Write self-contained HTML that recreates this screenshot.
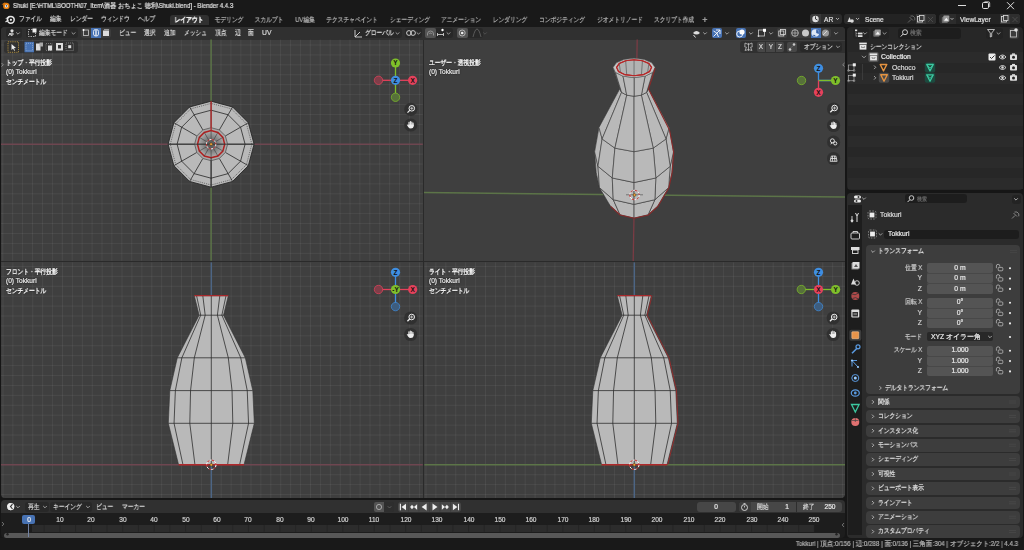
<!DOCTYPE html><html><head><meta charset="utf-8"><style>
html,body{margin:0;padding:0;width:1024px;height:550px;overflow:hidden;background:#161616}
body{position:relative;font-family:"Liberation Sans",sans-serif}
.t{position:absolute;white-space:nowrap;line-height:1.2;will-change:transform;-webkit-text-stroke:0.2px currentColor}
.b{position:absolute}
svg{position:absolute;overflow:hidden}
</style></head><body>
<div class="b" style="left:0.00px;top:0.00px;width:1024.00px;height:26.50px;background:#191919;"></div>
<svg style="left:0px;top:0px" width="14" height="12" viewBox="0 0 14 12"><g transform="translate(5.5,5.6)"><circle cx="0.8" cy="0.3" r="3.2" fill="#e87d0d"/><circle cx="0.9" cy="0.3" r="1.5" fill="#fff"/><circle cx="0.9" cy="0.3" r="0.8" fill="#265787"/><path d="M-4,-1 L0,-3.5 L-1.5,-1 Z" fill="#e87d0d"/></g></svg>
<div class="t" style="left:12.50px;top:1.92px;font-size:6.8px;color:#e2e2e2;transform:scaleX(0.89);transform-origin:left center;">Shuki [E:\HTML\BOOTH\07_Item\酒器 おちょこ 徳利\Shuki.blend] - Blender 4.4.3</div>
<div class="b" style="left:958.00px;top:5.20px;width:8.00px;height:0.90px;background:#dedede;"></div>
<svg style="left:976px;top:0px" width="20" height="12" viewBox="976 0 20 12"><rect x="982.5" y="2.5" width="6" height="6" rx="1.2" fill="none" stroke="#dedede" stroke-width="1"/><path d="M984.5,1.8 h4 a1.2,1.2 0 0 1 1.2,1.2 v4" fill="none" stroke="#dedede" stroke-width="0.8"/></svg>
<svg style="left:1000px;top:0px" width="24" height="12" viewBox="1000 0 24 12"><path d="M1007,2.2 L1014,9.2 M1014,2.2 L1007,9.2" stroke="#dedede" stroke-width="1"/></svg>
<svg style="left:0px;top:12px" width="20" height="14" viewBox="0 12 20 14"><g transform="translate(10,19.5)"><circle cx="0.8" cy="0.3" r="3.4" fill="none" stroke="#e6e6e6" stroke-width="1.5"/><circle cx="0.9" cy="0.3" r="1.1" fill="#e6e6e6"/><path d="M-4.8,-0.8 L-0.5,-3.9 L-1.6,-0.9 Z" fill="#e6e6e6"/><path d="M-4.5,2.5 L-1.5,0.5" stroke="#e6e6e6" stroke-width="1.2"/></g></svg>
<div class="t" style="left:19.00px;top:15.30px;font-size:7px;color:#d0d0d0;transform:scaleX(0.82);transform-origin:left center;">ファイル</div>
<div class="t" style="left:50.00px;top:15.30px;font-size:7px;color:#d0d0d0;transform:scaleX(0.82);transform-origin:left center;">編集</div>
<div class="t" style="left:70.00px;top:15.30px;font-size:7px;color:#d0d0d0;transform:scaleX(0.82);transform-origin:left center;">レンダー</div>
<div class="t" style="left:101.00px;top:15.30px;font-size:7px;color:#d0d0d0;transform:scaleX(0.82);transform-origin:left center;">ウィンドウ</div>
<div class="t" style="left:138.00px;top:15.30px;font-size:7px;color:#d0d0d0;transform:scaleX(0.82);transform-origin:left center;">ヘルプ</div>
<div class="b" style="left:169.80px;top:15.20px;width:39.00px;height:10.00px;background:#303030;border-radius:3px 3px 0 0"></div>
<div class="t" style="left:189.20px;top:16.20px;font-size:7px;color:#ececec;transform:translateX(-50%) scaleX(0.82);font-weight:bold;transform-origin:center center;">レイアウト</div>
<div class="t" style="left:229.00px;top:16.20px;font-size:7px;color:#b0b0b0;transform:translateX(-50%) scaleX(0.82);transform-origin:center center;">モデリング</div>
<div class="t" style="left:268.50px;top:16.20px;font-size:7px;color:#b0b0b0;transform:translateX(-50%) scaleX(0.82);transform-origin:center center;">スカルプト</div>
<div class="t" style="left:304.50px;top:16.20px;font-size:7px;color:#b0b0b0;transform:translateX(-50%) scaleX(0.82);transform-origin:center center;">UV編集</div>
<div class="t" style="left:351.50px;top:16.20px;font-size:7px;color:#b0b0b0;transform:translateX(-50%) scaleX(0.82);transform-origin:center center;">テクスチャペイント</div>
<div class="t" style="left:409.50px;top:16.20px;font-size:7px;color:#b0b0b0;transform:translateX(-50%) scaleX(0.82);transform-origin:center center;">シェーディング</div>
<div class="t" style="left:460.50px;top:16.20px;font-size:7px;color:#b0b0b0;transform:translateX(-50%) scaleX(0.82);transform-origin:center center;">アニメーション</div>
<div class="t" style="left:509.50px;top:16.20px;font-size:7px;color:#b0b0b0;transform:translateX(-50%) scaleX(0.82);transform-origin:center center;">レンダリング</div>
<div class="t" style="left:561.50px;top:16.20px;font-size:7px;color:#b0b0b0;transform:translateX(-50%) scaleX(0.82);transform-origin:center center;">コンポジティング</div>
<div class="t" style="left:619.50px;top:16.20px;font-size:7px;color:#b0b0b0;transform:translateX(-50%) scaleX(0.82);transform-origin:center center;">ジオメトリノード</div>
<div class="t" style="left:674.00px;top:16.20px;font-size:7px;color:#b0b0b0;transform:translateX(-50%) scaleX(0.82);transform-origin:center center;">スクリプト作成</div>
<div class="t" style="left:705.00px;top:14.80px;font-size:9px;color:#b8b8b8;transform:translateX(-50%) ;">+</div>
<div class="b" style="left:810.00px;top:14.00px;width:31.50px;height:10.00px;background:#2c2c2c;border-radius:3px"></div>
<div class="b" style="left:810.00px;top:14.00px;width:11.00px;height:10.00px;background:#3a3a3a;border-radius:3px 0 0 3px"></div>
<svg style="left:808px;top:12px" width="16" height="14" viewBox="808 12 16 14"><circle cx="815.5" cy="19" r="3.2" fill="#e0e0e0"/><path d="M815.5,19 L815.5,16.3 M815.5,19 L817.5,20" stroke="#2c2c2c" stroke-width="0.9"/></svg>
<div class="t" style="left:824.00px;top:15.74px;font-size:6.6px;color:#e0e0e0;">AR</div>
<svg style="left:832px;top:12px" width="10" height="14" viewBox="832 12 10 14"><path d="M836,18 l1.5,1.6 l1.5,-1.6" fill="none" stroke="#ccc" stroke-width="0.8"/></svg>
<div class="b" style="left:844.00px;top:14.00px;width:91.50px;height:10.00px;background:#232323;border-radius:3px"></div>
<div class="b" style="left:844.00px;top:14.00px;width:16.00px;height:10.00px;background:#2c2c2c;border-radius:3px 0 0 3px"></div>
<div class="b" style="left:915.50px;top:14.00px;width:20.00px;height:10.00px;background:#3a3a3a;border-radius:0 3px 3px 0"></div>
<div class="b" style="left:925.50px;top:14.00px;width:10.00px;height:10.00px;background:#2e2e2e;border-radius:0 3px 3px 0"></div>
<svg style="left:844px;top:12px" width="18" height="14" viewBox="844 12 18 14"><path d="M847.5,22 l2,-5 l2,5 z" fill="#ddd"/><circle cx="852" cy="21" r="1.8" fill="#ddd"/><path d="M856,18 l1.5,1.6 l1.5,-1.6" fill="none" stroke="#ccc" stroke-width="0.8"/></svg>
<div class="t" style="left:865.00px;top:15.74px;font-size:6.6px;color:#e0e0e0;">Scene</div>
<svg style="left:900px;top:12px" width="40" height="14" viewBox="900 12 40 14"><path d="M908,22.5 l3,-3 M909.5,17 l3.5,3.5 M910.5,16 l2.5,-0 l1.8,1.8 l0,2.5" stroke="#777" stroke-width="0.8" fill="none"/><rect x="917.5" y="16.5" width="5" height="5.5" fill="none" stroke="#ddd" stroke-width="0.8"/><rect x="919.5" y="15.5" width="4.5" height="5" fill="#3a3a3a" stroke="#ddd" stroke-width="0.8"/><path d="M928,17 l5,5 M933,17 l-5,5" stroke="#555" stroke-width="0.7"/></svg>
<div class="b" style="left:938.70px;top:14.00px;width:81.00px;height:10.00px;background:#232323;border-radius:3px"></div>
<div class="b" style="left:938.70px;top:14.00px;width:17.00px;height:10.00px;background:#2c2c2c;border-radius:3px 0 0 3px"></div>
<div class="b" style="left:1000.00px;top:14.00px;width:20.00px;height:10.00px;background:#3a3a3a;border-radius:0 3px 3px 0"></div>
<div class="b" style="left:1010.00px;top:14.00px;width:10.00px;height:10.00px;background:#2e2e2e;border-radius:0 3px 3px 0"></div>
<svg style="left:938px;top:12px" width="20" height="14" viewBox="938 12 20 14"><rect x="941.8" y="17" width="6" height="6" rx="0.8" fill="#6a6a6a"/><rect x="943.3" y="15.6" width="6" height="6.2" rx="0.8" fill="#9a9a9a"/><path d="M944.1,20.8 l2.2,-3 l2.2,3 z" fill="#f4f4f4"/><path d="M950.5,18 l1.5,1.6 l1.5,-1.6" fill="none" stroke="#ccc" stroke-width="0.8"/></svg>
<div class="t" style="left:959.50px;top:15.74px;font-size:6.6px;color:#e0e0e0;">ViewLayer</div>
<svg style="left:1000px;top:12px" width="24" height="14" viewBox="1000 12 24 14"><rect x="1001.5" y="16.5" width="5" height="5.5" fill="none" stroke="#ddd" stroke-width="0.8"/><rect x="1003.5" y="15.5" width="4.5" height="5" fill="#3a3a3a" stroke="#ddd" stroke-width="0.8"/><path d="M1012.5,17 l5,5 M1017.5,17 l-5,5" stroke="#555" stroke-width="0.7"/></svg>
<div class="b" style="left:1.00px;top:26.50px;width:844.00px;height:471.50px;background:#3f3f3f;border-radius:4px"></div>
<div class="b" style="left:1.00px;top:26.50px;width:844.00px;height:13.00px;background:#303030;border-radius:4px 4px 0 0"></div>
<div class="b" style="left:422.80px;top:39.50px;width:1.60px;height:458.50px;background:#2a2a2a;"></div>
<div class="b" style="left:1.00px;top:260.80px;width:844.00px;height:1.60px;background:#2a2a2a;"></div>
<svg style="left:1px;top:39px" width="422" height="222" viewBox="1 39 422 222"><g stroke="rgba(255,255,255,0.058)" stroke-width="1" fill="none"><path d="M2.78,39.5 V260.8"/><path d="M12.70,39.5 V260.8"/><path d="M22.62,39.5 V260.8"/><path d="M32.54,39.5 V260.8"/><path d="M42.46,39.5 V260.8"/><path d="M52.38,39.5 V260.8"/><path d="M62.30,39.5 V260.8"/><path d="M72.22,39.5 V260.8"/><path d="M82.14,39.5 V260.8"/><path d="M92.06,39.5 V260.8"/><path d="M101.98,39.5 V260.8"/><path d="M111.90,39.5 V260.8"/><path d="M121.82,39.5 V260.8"/><path d="M131.74,39.5 V260.8"/><path d="M141.66,39.5 V260.8"/><path d="M151.58,39.5 V260.8"/><path d="M161.50,39.5 V260.8"/><path d="M171.42,39.5 V260.8"/><path d="M181.34,39.5 V260.8"/><path d="M191.26,39.5 V260.8"/><path d="M201.18,39.5 V260.8"/><path d="M221.02,39.5 V260.8"/><path d="M230.94,39.5 V260.8"/><path d="M240.86,39.5 V260.8"/><path d="M250.78,39.5 V260.8"/><path d="M260.70,39.5 V260.8"/><path d="M270.62,39.5 V260.8"/><path d="M280.54,39.5 V260.8"/><path d="M290.46,39.5 V260.8"/><path d="M300.38,39.5 V260.8"/><path d="M310.30,39.5 V260.8"/><path d="M320.22,39.5 V260.8"/><path d="M330.14,39.5 V260.8"/><path d="M340.06,39.5 V260.8"/><path d="M349.98,39.5 V260.8"/><path d="M359.90,39.5 V260.8"/><path d="M369.82,39.5 V260.8"/><path d="M379.74,39.5 V260.8"/><path d="M389.66,39.5 V260.8"/><path d="M399.58,39.5 V260.8"/><path d="M409.50,39.5 V260.8"/><path d="M419.42,39.5 V260.8"/><path d="M1,45.00 H422.8"/><path d="M1,54.92 H422.8"/><path d="M1,64.84 H422.8"/><path d="M1,74.76 H422.8"/><path d="M1,84.68 H422.8"/><path d="M1,94.60 H422.8"/><path d="M1,104.52 H422.8"/><path d="M1,114.44 H422.8"/><path d="M1,124.36 H422.8"/><path d="M1,134.28 H422.8"/><path d="M1,154.12 H422.8"/><path d="M1,164.04 H422.8"/><path d="M1,173.96 H422.8"/><path d="M1,183.88 H422.8"/><path d="M1,193.80 H422.8"/><path d="M1,203.72 H422.8"/><path d="M1,213.64 H422.8"/><path d="M1,223.56 H422.8"/><path d="M1,233.48 H422.8"/><path d="M1,243.40 H422.8"/><path d="M1,253.32 H422.8"/></g></svg>
<svg style="left:1px;top:262px" width="422" height="236" viewBox="1 262 422 236"><g stroke="rgba(255,255,255,0.058)" stroke-width="1" fill="none"><path d="M2.98,262.40000000000003 V498"/><path d="M12.90,262.40000000000003 V498"/><path d="M22.82,262.40000000000003 V498"/><path d="M32.74,262.40000000000003 V498"/><path d="M42.66,262.40000000000003 V498"/><path d="M52.58,262.40000000000003 V498"/><path d="M62.50,262.40000000000003 V498"/><path d="M72.42,262.40000000000003 V498"/><path d="M82.34,262.40000000000003 V498"/><path d="M92.26,262.40000000000003 V498"/><path d="M102.18,262.40000000000003 V498"/><path d="M112.10,262.40000000000003 V498"/><path d="M122.02,262.40000000000003 V498"/><path d="M131.94,262.40000000000003 V498"/><path d="M141.86,262.40000000000003 V498"/><path d="M151.78,262.40000000000003 V498"/><path d="M161.70,262.40000000000003 V498"/><path d="M171.62,262.40000000000003 V498"/><path d="M181.54,262.40000000000003 V498"/><path d="M191.46,262.40000000000003 V498"/><path d="M201.38,262.40000000000003 V498"/><path d="M221.22,262.40000000000003 V498"/><path d="M231.14,262.40000000000003 V498"/><path d="M241.06,262.40000000000003 V498"/><path d="M250.98,262.40000000000003 V498"/><path d="M260.90,262.40000000000003 V498"/><path d="M270.82,262.40000000000003 V498"/><path d="M280.74,262.40000000000003 V498"/><path d="M290.66,262.40000000000003 V498"/><path d="M300.58,262.40000000000003 V498"/><path d="M310.50,262.40000000000003 V498"/><path d="M320.42,262.40000000000003 V498"/><path d="M330.34,262.40000000000003 V498"/><path d="M340.26,262.40000000000003 V498"/><path d="M350.18,262.40000000000003 V498"/><path d="M360.10,262.40000000000003 V498"/><path d="M370.02,262.40000000000003 V498"/><path d="M379.94,262.40000000000003 V498"/><path d="M389.86,262.40000000000003 V498"/><path d="M399.78,262.40000000000003 V498"/><path d="M409.70,262.40000000000003 V498"/><path d="M419.62,262.40000000000003 V498"/><path d="M1,266.40 H422.8"/><path d="M1,276.32 H422.8"/><path d="M1,286.24 H422.8"/><path d="M1,296.16 H422.8"/><path d="M1,306.08 H422.8"/><path d="M1,316.00 H422.8"/><path d="M1,325.92 H422.8"/><path d="M1,335.84 H422.8"/><path d="M1,345.76 H422.8"/><path d="M1,355.68 H422.8"/><path d="M1,365.60 H422.8"/><path d="M1,375.52 H422.8"/><path d="M1,385.44 H422.8"/><path d="M1,395.36 H422.8"/><path d="M1,405.28 H422.8"/><path d="M1,415.20 H422.8"/><path d="M1,425.12 H422.8"/><path d="M1,435.04 H422.8"/><path d="M1,444.96 H422.8"/><path d="M1,454.88 H422.8"/><path d="M1,474.72 H422.8"/><path d="M1,484.64 H422.8"/><path d="M1,494.56 H422.8"/></g></svg>
<svg style="left:424px;top:262px" width="421" height="236" viewBox="424 262 421 236"><g stroke="rgba(255,255,255,0.058)" stroke-width="1" fill="none"><path d="M425.98,262.40000000000003 V498"/><path d="M435.90,262.40000000000003 V498"/><path d="M445.82,262.40000000000003 V498"/><path d="M455.74,262.40000000000003 V498"/><path d="M465.66,262.40000000000003 V498"/><path d="M475.58,262.40000000000003 V498"/><path d="M485.50,262.40000000000003 V498"/><path d="M495.42,262.40000000000003 V498"/><path d="M505.34,262.40000000000003 V498"/><path d="M515.26,262.40000000000003 V498"/><path d="M525.18,262.40000000000003 V498"/><path d="M535.10,262.40000000000003 V498"/><path d="M545.02,262.40000000000003 V498"/><path d="M554.94,262.40000000000003 V498"/><path d="M564.86,262.40000000000003 V498"/><path d="M574.78,262.40000000000003 V498"/><path d="M584.70,262.40000000000003 V498"/><path d="M594.62,262.40000000000003 V498"/><path d="M604.54,262.40000000000003 V498"/><path d="M614.46,262.40000000000003 V498"/><path d="M624.38,262.40000000000003 V498"/><path d="M644.22,262.40000000000003 V498"/><path d="M654.14,262.40000000000003 V498"/><path d="M664.06,262.40000000000003 V498"/><path d="M673.98,262.40000000000003 V498"/><path d="M683.90,262.40000000000003 V498"/><path d="M693.82,262.40000000000003 V498"/><path d="M703.74,262.40000000000003 V498"/><path d="M713.66,262.40000000000003 V498"/><path d="M723.58,262.40000000000003 V498"/><path d="M733.50,262.40000000000003 V498"/><path d="M743.42,262.40000000000003 V498"/><path d="M753.34,262.40000000000003 V498"/><path d="M763.26,262.40000000000003 V498"/><path d="M773.18,262.40000000000003 V498"/><path d="M783.10,262.40000000000003 V498"/><path d="M793.02,262.40000000000003 V498"/><path d="M802.94,262.40000000000003 V498"/><path d="M812.86,262.40000000000003 V498"/><path d="M822.78,262.40000000000003 V498"/><path d="M832.70,262.40000000000003 V498"/><path d="M842.62,262.40000000000003 V498"/><path d="M424.40000000000003,266.40 H845"/><path d="M424.40000000000003,276.32 H845"/><path d="M424.40000000000003,286.24 H845"/><path d="M424.40000000000003,296.16 H845"/><path d="M424.40000000000003,306.08 H845"/><path d="M424.40000000000003,316.00 H845"/><path d="M424.40000000000003,325.92 H845"/><path d="M424.40000000000003,335.84 H845"/><path d="M424.40000000000003,345.76 H845"/><path d="M424.40000000000003,355.68 H845"/><path d="M424.40000000000003,365.60 H845"/><path d="M424.40000000000003,375.52 H845"/><path d="M424.40000000000003,385.44 H845"/><path d="M424.40000000000003,395.36 H845"/><path d="M424.40000000000003,405.28 H845"/><path d="M424.40000000000003,415.20 H845"/><path d="M424.40000000000003,425.12 H845"/><path d="M424.40000000000003,435.04 H845"/><path d="M424.40000000000003,444.96 H845"/><path d="M424.40000000000003,454.88 H845"/><path d="M424.40000000000003,474.72 H845"/><path d="M424.40000000000003,484.64 H845"/><path d="M424.40000000000003,494.56 H845"/></g></svg>
<svg style="left:1px;top:141px" width="422" height="6" viewBox="1 141 422 6"><path d="M1,144.2 H422.8" stroke="#6e4650" stroke-width="1.5"/></svg>
<svg style="left:208px;top:39px" width="6" height="222" viewBox="208 39 6 222"><path d="M211.1,39.5 V260.8" stroke="#5c7448" stroke-width="1.5"/></svg>
<svg style="left:1px;top:461px" width="422" height="6" viewBox="1 461 422 6"><path d="M1,464.8 H422.8" stroke="#6e4650" stroke-width="1.5"/></svg>
<svg style="left:208px;top:262px" width="6" height="236" viewBox="208 262 6 236"><path d="M211.3,262.40000000000003 V498" stroke="#4d6584" stroke-width="1.5"/></svg>
<svg style="left:424px;top:461px" width="421" height="6" viewBox="424 461 421 6"><path d="M424.40000000000003,464.8 H845" stroke="#5c7448" stroke-width="1.5"/></svg>
<svg style="left:631px;top:262px" width="6" height="236" viewBox="631 262 6 236"><path d="M634.3,262.40000000000003 V498" stroke="#4d6584" stroke-width="1.5"/></svg>
<svg style="left:424px;top:185px" width="421" height="20" viewBox="424 185 421 20"><path d="M424,192.6 L845,197" stroke="#5c7448" stroke-width="1.5"/></svg>
<svg style="left:625px;top:39px" width="20" height="223" viewBox="625 39 20 223"><path d="M637.2,39.5 L633.2,261" stroke="#7a3c44" stroke-width="1.3"/></svg>
<svg style="left:1px;top:262px" width="421" height="235" viewBox="1 262 421 235"><path d="M228.30,295.70 L223.50,315.20 L245.30,357.80 L252.80,390.60 L254.30,423.30 L244.00,464.80 L178.60,464.80 L168.30,423.30 L169.80,390.60 L177.30,357.80 L199.10,315.20 L194.30,295.70Z" fill="#b9b9b9" stroke="#303030" stroke-width="0.6"/><path d="M199.10,315.20 H223.50 M177.30,357.80 H245.30 M169.80,390.60 H252.80 M168.30,423.30 H254.30 M226.02,295.70 L221.87,315.20 L240.74,357.80 L247.24,390.60 L248.54,423.30 L239.62,464.80 M219.80,295.70 L217.40,315.20 L228.30,357.80 L232.05,390.60 L232.80,423.30 L227.65,464.80 M211.30,295.70 L211.30,315.20 L211.30,357.80 L211.30,390.60 L211.30,423.30 L211.30,464.80 M202.80,295.70 L205.20,315.20 L194.30,357.80 L190.55,390.60 L189.80,423.30 L194.95,464.80 M196.58,295.70 L200.73,315.20 L181.86,357.80 L175.36,390.60 L174.06,423.30 L182.98,464.80" fill="none" stroke="#262626" stroke-width="0.75"/><path d="M194.30,295.70 H228.30" stroke="#a8282b" stroke-width="1.2"/><path d="M178.60,464.80 H244.00" stroke="#b0282b" stroke-width="1.6"/><circle cx="211.3" cy="464.8" r="4.7" fill="none" stroke="#fff" stroke-width="1" stroke-dasharray="2.46 2.46"/><circle cx="211.3" cy="464.8" r="4.7" fill="none" stroke="#d03030" stroke-width="1" stroke-dasharray="2.46 2.46" stroke-dashoffset="2.46"/><circle cx="211.3" cy="464.8" r="1.4" fill="#f0a030" stroke="#222" stroke-width="0.4"/></svg>
<svg style="left:424px;top:262px" width="420" height="235" viewBox="424 262 420 235"><path d="M651.30,295.70 L646.50,315.20 L668.30,357.80 L675.80,390.60 L677.30,423.30 L667.00,464.80 L601.60,464.80 L591.30,423.30 L592.80,390.60 L600.30,357.80 L622.10,315.20 L617.30,295.70Z" fill="#b9b9b9" stroke="#303030" stroke-width="0.6"/><path d="M622.10,315.20 H646.50 M600.30,357.80 H668.30 M592.80,390.60 H675.80 M591.30,423.30 H677.30 M649.02,295.70 L644.87,315.20 L663.74,357.80 L670.24,390.60 L671.54,423.30 L662.62,464.80 M642.80,295.70 L640.40,315.20 L651.30,357.80 L655.05,390.60 L655.80,423.30 L650.65,464.80 M634.30,295.70 L634.30,315.20 L634.30,357.80 L634.30,390.60 L634.30,423.30 L634.30,464.80 M625.80,295.70 L628.20,315.20 L617.30,357.80 L613.55,390.60 L612.80,423.30 L617.95,464.80 M619.58,295.70 L623.73,315.20 L604.86,357.80 L598.36,390.60 L597.06,423.30 L605.98,464.80" fill="none" stroke="#262626" stroke-width="0.75"/><path d="M617.30,295.70 H651.30" stroke="#a8282b" stroke-width="1.2"/><path d="M601.60,464.80 H667.00" stroke="#b0282b" stroke-width="1.6"/><path d="M652.00,295.70 L647.20,315.20 L669.00,357.80 L676.50,390.60 L678.00,423.30 L667.70,464.80" fill="none" stroke="#9a2a2a" stroke-width="0.9"/><circle cx="634.3" cy="464.8" r="4.7" fill="none" stroke="#fff" stroke-width="1" stroke-dasharray="2.46 2.46"/><circle cx="634.3" cy="464.8" r="4.7" fill="none" stroke="#d03030" stroke-width="1" stroke-dasharray="2.46 2.46" stroke-dashoffset="2.46"/><circle cx="634.3" cy="464.8" r="1.4" fill="#f0a030" stroke="#222" stroke-width="0.4"/></svg>
<svg style="left:1px;top:39px" width="421" height="221" viewBox="1 39 421 221"><path d="M254.10,144.20 L248.34,122.70 L232.60,106.96 L211.10,101.20 L189.60,106.96 L173.86,122.70 L168.10,144.20 L173.86,165.70 L189.60,181.44 L211.10,187.20 L232.60,181.44 L248.34,165.70Z" fill="#b9b9b9" stroke="#262626" stroke-width="0.9"/><path d="M251.90,144.20 L246.43,123.80 L231.50,108.87 L211.10,103.40 L190.70,108.87 L175.77,123.80 L170.30,144.20 L175.77,164.60 L190.70,179.53 L211.10,185.00 L231.50,179.53 L246.43,164.60Z" fill="none" stroke="#3a3a3a" stroke-width="0.6" stroke-dasharray="1.2 1"/><path d="M245.10,144.20 L240.54,127.20 L228.10,114.76 L211.10,110.20 L194.10,114.76 L181.66,127.20 L177.10,144.20 L181.66,161.20 L194.10,173.64 L211.10,178.20 L228.10,173.64 L240.54,161.20Z" fill="none" stroke="#262626" stroke-width="0.8"/><path d="M227.60,144.20 L254.10,144.20 M225.39,135.95 L248.34,122.70 M219.35,129.91 L232.60,106.96 M211.10,127.70 L211.10,101.20 M202.85,129.91 L189.60,106.96 M196.81,135.95 L173.86,122.70 M194.60,144.20 L168.10,144.20 M196.81,152.45 L173.86,165.70 M202.85,158.49 L189.60,181.44 M211.10,160.70 L211.10,187.20 M219.35,158.49 L232.60,181.44 M225.39,152.45 L248.34,165.70" stroke="#262626" stroke-width="0.8"/><defs><radialGradient id="inn"><stop offset="0" stop-color="#505050"/><stop offset="0.6" stop-color="#8a8a8a"/><stop offset="1" stop-color="#b0b0b0"/></radialGradient></defs><path d="M227.60,144.20 L225.39,135.95 L219.35,129.91 L211.10,127.70 L202.85,129.91 L196.81,135.95 L194.60,144.20 L196.81,152.45 L202.85,158.49 L211.10,160.70 L219.35,158.49 L225.39,152.45Z" fill="#a8a8a8" stroke="#555" stroke-width="0.8"/><path d="M224.70,144.20 L222.88,137.40 L217.90,132.42 L211.10,130.60 L204.30,132.42 L199.32,137.40 L197.50,144.20 L199.32,151.00 L204.30,155.98 L211.10,157.80 L217.90,155.98 L222.88,151.00Z" fill="url(#inn)" stroke="#b02020" stroke-width="1.5"/><path d="M214.10,144.20 L224.70,144.20 M213.70,142.70 L222.88,137.40 M212.60,141.60 L217.90,132.42 M211.10,141.20 L211.10,130.60 M209.60,141.60 L204.30,132.42 M208.50,142.70 L199.32,137.40 M208.10,144.20 L197.50,144.20 M208.50,145.70 L199.32,151.00 M209.60,146.80 L204.30,155.98 M211.10,147.20 L211.10,157.80 M212.60,146.80 L217.90,155.98 M213.70,145.70 L222.88,151.00" stroke="#3a3a3a" stroke-width="0.6"/><path d="M168.1,144.2 H254.1" stroke="#333" stroke-width="0.9"/><path d="M211.1,101.19999999999999 V130.6" stroke="#b52828" stroke-width="1.3"/><path d="M211.1,157.79999999999998 V187.2" stroke="#262626" stroke-width="0.8"/><circle cx="211.1" cy="144.2" r="4.7" fill="none" stroke="#fff" stroke-width="1" stroke-dasharray="2.46 2.46"/><circle cx="211.1" cy="144.2" r="4.7" fill="none" stroke="#d03030" stroke-width="1" stroke-dasharray="2.46 2.46" stroke-dashoffset="2.46"/><circle cx="211.1" cy="144.2" r="1.4" fill="#f0a030" stroke="#222" stroke-width="0.4"/></svg>
<svg style="left:424px;top:39px" width="420" height="221" viewBox="424 39 420 221"><path d="M651.41,150.09 L634.06,146.94 L634.06,175.06 L646.45,177.57Z" fill="#b9b9b9" stroke="#383838" stroke-width="0.62" stroke-linejoin="round"/><path d="M634.06,146.94 L616.72,150.09 L621.68,177.57 L634.06,175.06Z" fill="#b9b9b9" stroke="#383838" stroke-width="0.62" stroke-linejoin="round"/><path d="M665.21,159.14 L651.41,150.09 L646.45,177.57 L656.07,184.67Z" fill="#b9b9b9" stroke="#383838" stroke-width="0.62" stroke-linejoin="round"/><path d="M616.72,150.09 L602.92,159.14 L612.06,184.67 L621.68,177.57Z" fill="#b9b9b9" stroke="#383838" stroke-width="0.62" stroke-linejoin="round"/><path d="M671.92,172.63 L665.21,159.14 L656.07,184.67 L660.40,194.99Z" fill="#b9b9b9" stroke="#383838" stroke-width="0.62" stroke-linejoin="round"/><path d="M602.92,159.14 L596.21,172.63 L607.72,194.99 L612.06,184.67Z" fill="#b9b9b9" stroke="#383838" stroke-width="0.62" stroke-linejoin="round"/><path d="M652.07,130.26 L634.06,127.25 L634.06,146.94 L651.41,150.09Z" fill="#b9b9b9" stroke="#383838" stroke-width="0.62" stroke-linejoin="round"/><path d="M634.06,127.25 L616.06,130.26 L616.72,150.09 L634.06,146.94Z" fill="#b9b9b9" stroke="#383838" stroke-width="0.62" stroke-linejoin="round"/><path d="M666.43,138.91 L652.07,130.26 L651.41,150.09 L665.21,159.14Z" fill="#b9b9b9" stroke="#383838" stroke-width="0.62" stroke-linejoin="round"/><path d="M616.06,130.26 L601.69,138.91 L602.92,159.14 L616.72,150.09Z" fill="#b9b9b9" stroke="#383838" stroke-width="0.62" stroke-linejoin="round"/><path d="M596.21,172.63 L599.46,187.62 L610.39,206.10 L607.72,194.99Z" fill="#b9b9b9" stroke="#383838" stroke-width="0.62" stroke-linejoin="round"/><path d="M668.67,187.62 L671.92,172.63 L660.40,194.99 L657.74,206.10Z" fill="#b9b9b9" stroke="#383838" stroke-width="0.62" stroke-linejoin="round"/><path d="M673.49,151.85 L666.43,138.91 L665.21,159.14 L671.92,172.63Z" fill="#b9b9b9" stroke="#383838" stroke-width="0.62" stroke-linejoin="round"/><path d="M601.69,138.91 L594.64,151.85 L596.21,172.63 L602.92,159.14Z" fill="#b9b9b9" stroke="#383838" stroke-width="0.62" stroke-linejoin="round"/><path d="M599.46,187.62 L613.24,199.70 L620.00,214.78 L610.39,206.10Z" fill="#b9b9b9" stroke="#383838" stroke-width="0.62" stroke-linejoin="round"/><path d="M654.89,199.70 L668.67,187.62 L657.74,206.10 L648.12,214.78Z" fill="#b9b9b9" stroke="#383838" stroke-width="0.62" stroke-linejoin="round"/><path d="M650.24,109.93 L634.06,107.46 L634.06,127.25 L652.07,130.26Z" fill="#b9b9b9" stroke="#383838" stroke-width="0.62" stroke-linejoin="round"/><path d="M634.06,107.46 L617.89,109.93 L616.06,130.26 L634.06,127.25Z" fill="#b9b9b9" stroke="#383838" stroke-width="0.62" stroke-linejoin="round"/><path d="M613.24,199.70 L634.06,204.38 L634.06,218.08 L620.00,214.78Z" fill="#b9b9b9" stroke="#383838" stroke-width="0.62" stroke-linejoin="round"/><path d="M634.06,204.38 L654.89,199.70 L648.12,214.78 L634.06,218.08Z" fill="#b9b9b9" stroke="#383838" stroke-width="0.62" stroke-linejoin="round"/><path d="M663.03,116.98 L650.24,109.93 L652.07,130.26 L666.43,138.91Z" fill="#b9b9b9" stroke="#383838" stroke-width="0.62" stroke-linejoin="round"/><path d="M617.89,109.93 L605.09,116.98 L601.69,138.91 L616.06,130.26Z" fill="#b9b9b9" stroke="#383838" stroke-width="0.62" stroke-linejoin="round"/><path d="M594.64,151.85 L597.94,166.29 L599.46,187.62 L596.21,172.63Z" fill="#b9b9b9" stroke="#383838" stroke-width="0.62" stroke-linejoin="round"/><path d="M670.19,166.29 L673.49,151.85 L671.92,172.63 L668.67,187.62Z" fill="#b9b9b9" stroke="#383838" stroke-width="0.62" stroke-linejoin="round"/><path d="M605.09,116.98 L598.98,127.42 L594.64,151.85 L601.69,138.91Z" fill="#b9b9b9" stroke="#383838" stroke-width="0.62" stroke-linejoin="round"/><path d="M669.15,127.42 L663.03,116.98 L666.43,138.91 L673.49,151.85Z" fill="#b9b9b9" stroke="#383838" stroke-width="0.62" stroke-linejoin="round"/><path d="M597.94,166.29 L612.28,177.98 L613.24,199.70 L599.46,187.62Z" fill="#b9b9b9" stroke="#383838" stroke-width="0.62" stroke-linejoin="round"/><path d="M655.84,177.98 L670.19,166.29 L668.67,187.62 L654.89,199.70Z" fill="#b9b9b9" stroke="#383838" stroke-width="0.62" stroke-linejoin="round"/><path d="M612.28,177.98 L634.06,182.51 L634.06,204.38 L613.24,199.70Z" fill="#b9b9b9" stroke="#383838" stroke-width="0.62" stroke-linejoin="round"/><path d="M634.06,182.51 L655.84,177.98 L654.89,199.70 L634.06,204.38Z" fill="#b9b9b9" stroke="#383838" stroke-width="0.62" stroke-linejoin="round"/><path d="M598.98,127.42 L602.12,138.94 L597.94,166.29 L594.64,151.85Z" fill="#b9b9b9" stroke="#383838" stroke-width="0.62" stroke-linejoin="round"/><path d="M666.00,138.94 L669.15,127.42 L673.49,151.85 L670.19,166.29Z" fill="#b9b9b9" stroke="#383838" stroke-width="0.62" stroke-linejoin="round"/><path d="M640.92,82.49 L634.06,81.57 L634.06,107.46 L650.24,109.93Z" fill="#b9b9b9" stroke="#383838" stroke-width="0.62" stroke-linejoin="round"/><path d="M634.06,81.57 L627.21,82.49 L617.89,109.93 L634.06,107.46Z" fill="#b9b9b9" stroke="#383838" stroke-width="0.62" stroke-linejoin="round"/><path d="M646.10,85.03 L640.92,82.49 L650.24,109.93 L663.03,116.98Z" fill="#b9b9b9" stroke="#383838" stroke-width="0.62" stroke-linejoin="round"/><path d="M627.21,82.49 L622.03,85.03 L605.09,116.98 L617.89,109.93Z" fill="#b9b9b9" stroke="#383838" stroke-width="0.62" stroke-linejoin="round"/><path d="M602.12,138.94 L614.90,148.15 L612.28,177.98 L597.94,166.29Z" fill="#b9b9b9" stroke="#383838" stroke-width="0.62" stroke-linejoin="round"/><path d="M653.22,148.15 L666.00,138.94 L670.19,166.29 L655.84,177.98Z" fill="#b9b9b9" stroke="#383838" stroke-width="0.62" stroke-linejoin="round"/><path d="M648.24,88.62 L646.10,85.03 L663.03,116.98 L669.15,127.42Z" fill="#b9b9b9" stroke="#383838" stroke-width="0.62" stroke-linejoin="round"/><path d="M622.03,85.03 L619.89,88.62 L598.98,127.42 L605.09,116.98Z" fill="#b9b9b9" stroke="#383838" stroke-width="0.62" stroke-linejoin="round"/><path d="M614.90,148.15 L634.06,151.70 L634.06,182.51 L612.28,177.98Z" fill="#b9b9b9" stroke="#383838" stroke-width="0.62" stroke-linejoin="round"/><path d="M634.06,151.70 L653.22,148.15 L655.84,177.98 L634.06,182.51Z" fill="#b9b9b9" stroke="#383838" stroke-width="0.62" stroke-linejoin="round"/><path d="M619.89,88.62 L621.54,92.35 L602.12,138.94 L598.98,127.42Z" fill="#b9b9b9" stroke="#383838" stroke-width="0.62" stroke-linejoin="round"/><path d="M646.59,92.35 L648.24,88.62 L669.15,127.42 L666.00,138.94Z" fill="#b9b9b9" stroke="#383838" stroke-width="0.62" stroke-linejoin="round"/><path d="M644.04,59.49 L634.06,58.33 L634.06,81.57 L640.92,82.49Z" fill="#b9b9b9" stroke="#383838" stroke-width="0.62" stroke-linejoin="round"/><path d="M634.06,58.33 L624.09,59.49 L627.21,82.49 L634.06,81.57Z" fill="#b9b9b9" stroke="#383838" stroke-width="0.62" stroke-linejoin="round"/><path d="M621.54,92.35 L626.73,95.19 L614.90,148.15 L602.12,138.94Z" fill="#b9b9b9" stroke="#383838" stroke-width="0.62" stroke-linejoin="round"/><path d="M641.40,95.19 L646.59,92.35 L666.00,138.94 L653.22,148.15Z" fill="#b9b9b9" stroke="#383838" stroke-width="0.62" stroke-linejoin="round"/><path d="M651.70,62.73 L644.04,59.49 L640.92,82.49 L646.10,85.03Z" fill="#b9b9b9" stroke="#383838" stroke-width="0.62" stroke-linejoin="round"/><path d="M624.09,59.49 L616.43,62.73 L622.03,85.03 L627.21,82.49Z" fill="#b9b9b9" stroke="#383838" stroke-width="0.62" stroke-linejoin="round"/><path d="M626.73,95.19 L634.06,96.24 L634.06,151.70 L614.90,148.15Z" fill="#b9b9b9" stroke="#383838" stroke-width="0.62" stroke-linejoin="round"/><path d="M634.06,96.24 L641.40,95.19 L653.22,148.15 L634.06,151.70Z" fill="#b9b9b9" stroke="#383838" stroke-width="0.62" stroke-linejoin="round"/><path d="M655.02,67.40 L651.70,62.73 L646.10,85.03 L648.24,88.62Z" fill="#b9b9b9" stroke="#383838" stroke-width="0.62" stroke-linejoin="round"/><path d="M616.43,62.73 L613.10,67.40 L619.89,88.62 L622.03,85.03Z" fill="#b9b9b9" stroke="#383838" stroke-width="0.62" stroke-linejoin="round"/><path d="M613.10,67.40 L615.37,72.34 L621.54,92.35 L619.89,88.62Z" fill="#b9b9b9" stroke="#383838" stroke-width="0.62" stroke-linejoin="round"/><path d="M652.76,72.34 L655.02,67.40 L648.24,88.62 L646.59,92.35Z" fill="#b9b9b9" stroke="#383838" stroke-width="0.62" stroke-linejoin="round"/><path d="M615.37,72.34 L623.03,76.14 L626.73,95.19 L621.54,92.35Z" fill="#b9b9b9" stroke="#383838" stroke-width="0.62" stroke-linejoin="round"/><path d="M645.10,76.14 L652.76,72.34 L646.59,92.35 L641.40,95.19Z" fill="#b9b9b9" stroke="#383838" stroke-width="0.62" stroke-linejoin="round"/><path d="M634.06,77.58 L645.10,76.14 L641.40,95.19 L634.06,96.24Z" fill="#b9b9b9" stroke="#383838" stroke-width="0.62" stroke-linejoin="round"/><path d="M623.03,76.14 L634.06,77.58 L634.06,96.24 L626.73,95.19Z" fill="#b9b9b9" stroke="#383838" stroke-width="0.62" stroke-linejoin="round"/><path d="M655.02,67.40 L651.70,62.73 L644.04,59.49 L634.06,58.33 L624.09,59.49 L616.43,62.73 L613.10,67.40 L615.37,72.34 L623.03,76.14 L634.06,77.58 L645.10,76.14 L652.76,72.34Z" fill="#c4c4c4" stroke="#555" stroke-width="0.6"/><path d="M651.57,67.40 L648.87,63.48 L642.46,60.74 L634.06,59.75 L625.66,60.74 L619.26,63.48 L616.56,67.40 L618.52,71.50 L624.92,74.64 L634.06,75.82 L643.20,74.64 L649.60,71.50Z" fill="#b2b2b2" stroke="#c0262b" stroke-width="1.1"/><clipPath id="rimclip"><path d="M651.57,67.40 L648.87,63.48 L642.46,60.74 L634.06,59.75 L625.66,60.74 L619.26,63.48 L616.56,67.40 L618.52,71.50 L624.92,74.64 L634.06,75.82 L643.20,74.64 L649.60,71.50Z"/></clipPath><path d="M648.87,63.48 L644.64,94.87 M642.46,60.74 L640.10,92.52 M634.06,59.75 L634.06,91.67 M625.66,60.74 L628.03,92.52 M619.26,63.48 L623.48,94.87" stroke="#4a4a4a" stroke-width="0.6" clip-path="url(#rimclip)"/><path d="M651.57,67.40 L648.87,63.48 L642.46,60.74 L634.06,59.75 L625.66,60.74 L619.26,63.48 L616.56,67.40 L618.52,71.50 L624.92,74.64 L634.06,75.82 L643.20,74.64 L649.60,71.50Z" fill="none" stroke="#b52828" stroke-width="1.1"/><path d="M655.26,68.27 L648.45,89.08 L669.51,129.94 L673.69,152.05 L672.12,172.83 L668.87,187.82 L657.94,206.30 L648.32,214.98 L634.26,218.28 L620.20,214.98 L610.59,206.30" fill="none" stroke="#8a2a2a" stroke-width="1.1" stroke-linejoin="round"/><path d="M626,194.8 H643" stroke="#444" stroke-width="0.6"/><circle cx="634.5" cy="195" r="4.7" fill="none" stroke="#fff" stroke-width="1" stroke-dasharray="2.46 2.46"/><circle cx="634.5" cy="195" r="4.7" fill="none" stroke="#d03030" stroke-width="1" stroke-dasharray="2.46 2.46" stroke-dashoffset="2.46"/><circle cx="634.5" cy="195" r="1.4" fill="#f0a030" stroke="#222" stroke-width="0.4"/></svg>
<div class="t" style="left:5.50px;top:58.54px;font-size:6.6px;color:#f0f0f0;transform:scaleX(0.82);text-shadow:0 0 1.5px #000,0 0 1px #000;-webkit-text-stroke:0.4px currentColor;transform-origin:left center;">トップ・平行投影</div>
<div class="t" style="left:5.50px;top:68.14px;font-size:6.6px;color:#f0f0f0;text-shadow:0 0 1.5px #000,0 0 1px #000;">(0) Tokkuri</div>
<div class="t" style="left:5.50px;top:77.74px;font-size:6.6px;color:#f0f0f0;transform:scaleX(0.82);text-shadow:0 0 1.5px #000,0 0 1px #000;-webkit-text-stroke:0.4px currentColor;transform-origin:left center;">センチメートル</div>
<div class="t" style="left:428.60px;top:58.84px;font-size:6.6px;color:#f0f0f0;transform:scaleX(0.82);text-shadow:0 0 1.5px #000,0 0 1px #000;-webkit-text-stroke:0.4px currentColor;transform-origin:left center;">ユーザー・透視投影</div>
<div class="t" style="left:428.60px;top:68.44px;font-size:6.6px;color:#f0f0f0;text-shadow:0 0 1.5px #000,0 0 1px #000;">(0) Tokkuri</div>
<div class="t" style="left:5.50px;top:267.84px;font-size:6.6px;color:#f0f0f0;transform:scaleX(0.82);text-shadow:0 0 1.5px #000,0 0 1px #000;-webkit-text-stroke:0.4px currentColor;transform-origin:left center;">フロント・平行投影</div>
<div class="t" style="left:5.50px;top:277.44px;font-size:6.6px;color:#f0f0f0;text-shadow:0 0 1.5px #000,0 0 1px #000;">(0) Tokkuri</div>
<div class="t" style="left:5.50px;top:287.04px;font-size:6.6px;color:#f0f0f0;transform:scaleX(0.82);text-shadow:0 0 1.5px #000,0 0 1px #000;-webkit-text-stroke:0.4px currentColor;transform-origin:left center;">センチメートル</div>
<div class="t" style="left:428.60px;top:267.84px;font-size:6.6px;color:#f0f0f0;transform:scaleX(0.82);text-shadow:0 0 1.5px #000,0 0 1px #000;-webkit-text-stroke:0.4px currentColor;transform-origin:left center;">ライト・平行投影</div>
<div class="t" style="left:428.60px;top:277.44px;font-size:6.6px;color:#f0f0f0;text-shadow:0 0 1.5px #000,0 0 1px #000;">(0) Tokkuri</div>
<div class="t" style="left:428.60px;top:287.04px;font-size:6.6px;color:#f0f0f0;transform:scaleX(0.82);text-shadow:0 0 1.5px #000,0 0 1px #000;-webkit-text-stroke:0.4px currentColor;transform-origin:left center;">センチメートル</div>
<svg style="left:360px;top:55px" width="63" height="85" viewBox="360 55 63 85"><path d="M395.5,80.3 L395.5,63.0" stroke="#7fbf2a" stroke-width="1.3"/><path d="M395.5,80.3 L412.6,80.3" stroke="#e5415b" stroke-width="1.3"/><path d="M395.5,80.3 L378.5,80.3" stroke="#e5415b" stroke-width="1.3"/><path d="M395.5,80.3 L395.5,97.3" stroke="#7fbf2a" stroke-width="1.3"/><circle cx="378.5" cy="80.3" r="4.2" fill="#803e49" stroke="#e5415b" stroke-opacity="0.7" stroke-width="1"/><circle cx="395.5" cy="97.3" r="4.2" fill="#57713a" stroke="#7fbf2a" stroke-opacity="0.7" stroke-width="1"/><circle cx="395.5" cy="63.0" r="4.6" fill="#7fbf2a"/><text x="395.5" y="65.3" font-size="6.4" font-weight="bold" text-anchor="middle" fill="#111" font-family="Liberation Sans">Y</text><circle cx="412.6" cy="80.3" r="4.6" fill="#e5415b"/><text x="412.6" y="82.6" font-size="6.4" font-weight="bold" text-anchor="middle" fill="#111" font-family="Liberation Sans">X</text><circle cx="395.5" cy="80.3" r="4.6" fill="#3f8ee0"/><text x="395.5" y="82.6" font-size="6.4" font-weight="bold" text-anchor="middle" fill="#111" font-family="Liberation Sans">Z</text><circle cx="410.8" cy="109.3" r="6.6" fill="#2e2e2e" fill-opacity="0.85"/><circle cx="411.8" cy="108.3" r="2.8" fill="none" stroke="#eee" stroke-width="1"/><path d="M410.0,110.1 L407.5,112.6" stroke="#eee" stroke-width="1.3"/><path d="M411.8,106.7 V109.89999999999999 M410.2,108.3 H413.40000000000003" stroke="#eee" stroke-width="0.7"/><circle cx="410.8" cy="125" r="6.6" fill="#2e2e2e" fill-opacity="0.85"/><path d="M409.0,125.5 V122.4 M410.40000000000003,125 V121.6 M411.8,125 V122 M413.1,125.5 V123" stroke="#eee" stroke-width="1.1" stroke-linecap="round"/><path d="M408.40000000000003,124.5 L413.7,124.5 L413.7,126.5 Q413.3,128.6 411.0,128.6 Q409.0,128.6 408.2,127 L406.8,124.8 Q407.2,124 408.40000000000003,125.2Z" fill="#eee"/></svg>
<svg style="left:360px;top:265px" width="63" height="80" viewBox="360 265 63 80"><path d="M395.5,289.5 L395.5,272.3" stroke="#3f8ee0" stroke-width="1.3"/><path d="M395.5,289.5 L412.7,289.5" stroke="#e5415b" stroke-width="1.3"/><path d="M395.5,289.5 L378.5,289.5" stroke="#e5415b" stroke-width="1.3"/><path d="M395.5,289.5 L395.5,306.6" stroke="#3f8ee0" stroke-width="1.3"/><circle cx="378.5" cy="289.5" r="4.2" fill="#803e49" stroke="#e5415b" stroke-opacity="0.7" stroke-width="1"/><circle cx="395.5" cy="306.6" r="4.2" fill="#3e5d7e" stroke="#3f8ee0" stroke-opacity="0.7" stroke-width="1"/><circle cx="395.5" cy="272.3" r="4.6" fill="#3f8ee0"/><text x="395.5" y="274.6" font-size="6.4" font-weight="bold" text-anchor="middle" fill="#111" font-family="Liberation Sans">Z</text><circle cx="412.7" cy="289.5" r="4.6" fill="#e5415b"/><text x="412.7" y="291.8" font-size="6.4" font-weight="bold" text-anchor="middle" fill="#111" font-family="Liberation Sans">X</text><circle cx="395.5" cy="289.5" r="4.6" fill="#7fbf2a"/><text x="395.5" y="291.8" font-size="6.4" font-weight="bold" text-anchor="middle" fill="#111" font-family="Liberation Sans">-Y</text><circle cx="410.7" cy="318" r="6.6" fill="#2e2e2e" fill-opacity="0.85"/><circle cx="411.7" cy="317" r="2.8" fill="none" stroke="#eee" stroke-width="1"/><path d="M409.9,318.8 L407.4,321.3" stroke="#eee" stroke-width="1.3"/><path d="M411.7,315.4 V318.6 M410.09999999999997,317 H413.3" stroke="#eee" stroke-width="0.7"/><circle cx="410.7" cy="334.5" r="6.6" fill="#2e2e2e" fill-opacity="0.85"/><path d="M408.9,335.0 V331.9 M410.3,334.5 V331.1 M411.7,334.5 V331.5 M413.0,335.0 V332.5" stroke="#eee" stroke-width="1.1" stroke-linecap="round"/><path d="M408.3,334.0 L413.59999999999997,334.0 L413.59999999999997,336.0 Q413.2,338.1 410.9,338.1 Q408.9,338.1 408.09999999999997,336.5 L406.7,334.3 Q407.09999999999997,333.5 408.3,334.7Z" fill="#eee"/></svg>
<svg style="left:790px;top:265px" width="55" height="80" viewBox="790 265 55 80"><path d="M818.5,289.5 L818.5,272.3" stroke="#3f8ee0" stroke-width="1.3"/><path d="M818.5,289.5 L835.6,289.5" stroke="#7fbf2a" stroke-width="1.3"/><path d="M818.5,289.5 L801.3,289.5" stroke="#7fbf2a" stroke-width="1.3"/><path d="M818.5,289.5 L818.5,306.6" stroke="#3f8ee0" stroke-width="1.3"/><circle cx="801.3" cy="289.5" r="4.2" fill="#57713a" stroke="#7fbf2a" stroke-opacity="0.7" stroke-width="1"/><circle cx="818.5" cy="306.6" r="4.2" fill="#3e5d7e" stroke="#3f8ee0" stroke-opacity="0.7" stroke-width="1"/><circle cx="818.5" cy="272.3" r="4.6" fill="#3f8ee0"/><text x="818.5" y="274.6" font-size="6.4" font-weight="bold" text-anchor="middle" fill="#111" font-family="Liberation Sans">Z</text><circle cx="835.6" cy="289.5" r="4.6" fill="#7fbf2a"/><text x="835.6" y="291.8" font-size="6.4" font-weight="bold" text-anchor="middle" fill="#111" font-family="Liberation Sans">Y</text><circle cx="818.5" cy="289.5" r="4.6" fill="#e5415b"/><text x="818.5" y="291.8" font-size="6.4" font-weight="bold" text-anchor="middle" fill="#111" font-family="Liberation Sans">X</text><circle cx="833.2" cy="318" r="6.6" fill="#2e2e2e" fill-opacity="0.85"/><circle cx="834.2" cy="317" r="2.8" fill="none" stroke="#eee" stroke-width="1"/><path d="M832.4000000000001,318.8 L829.9000000000001,321.3" stroke="#eee" stroke-width="1.3"/><path d="M834.2,315.4 V318.6 M832.6,317 H835.8000000000001" stroke="#eee" stroke-width="0.7"/><circle cx="833.2" cy="334.5" r="6.6" fill="#2e2e2e" fill-opacity="0.85"/><path d="M831.4000000000001,335.0 V331.9 M832.8000000000001,334.5 V331.1 M834.2,334.5 V331.5 M835.5,335.0 V332.5" stroke="#eee" stroke-width="1.1" stroke-linecap="round"/><path d="M830.8000000000001,334.0 L836.1,334.0 L836.1,336.0 Q835.7,338.1 833.4000000000001,338.1 Q831.4000000000001,338.1 830.6,336.5 L829.2,334.3 Q829.6,333.5 830.8000000000001,334.7Z" fill="#eee"/></svg>
<svg style="left:790px;top:55px" width="55" height="115" viewBox="790 55 55 115"><path d="M818.5,80.5 V68.3 M818.5,80.5 H835.5" stroke="#3f8ee0" stroke-width="1.3"/><path d="M818.5,80.5 H835.5" stroke="#7fbf2a" stroke-width="1.3"/><path d="M818.5,80.5 V92.3" stroke="#e5415b" stroke-width="1.3"/><circle cx="801.5" cy="80.5" r="4.2" fill="#57713a" stroke="#7fbf2a" stroke-opacity="0.7" stroke-width="1"/><circle cx="818.5" cy="68.3" r="4.6" fill="#3f8ee0"/><text x="818.5" y="70.6" font-size="6.4" font-weight="bold" text-anchor="middle" fill="#111" font-family="Liberation Sans">Z</text><circle cx="835.5" cy="80.5" r="4.6" fill="#7fbf2a"/><text x="835.5" y="82.8" font-size="6.4" font-weight="bold" text-anchor="middle" fill="#111" font-family="Liberation Sans">Y</text><circle cx="818.5" cy="92.3" r="4.6" fill="#e5415b"/><text x="818.5" y="94.6" font-size="6.4" font-weight="bold" text-anchor="middle" fill="#111" font-family="Liberation Sans">X</text><circle cx="833.6" cy="109" r="6.6" fill="#2e2e2e" fill-opacity="0.85"/><circle cx="834.6" cy="108" r="2.8" fill="none" stroke="#eee" stroke-width="1"/><path d="M832.8000000000001,109.8 L830.3000000000001,112.3" stroke="#eee" stroke-width="1.3"/><path d="M834.6,106.4 V109.6 M833.0,108 H836.2" stroke="#eee" stroke-width="0.7"/><circle cx="833.6" cy="125.5" r="6.6" fill="#2e2e2e" fill-opacity="0.85"/><path d="M831.8000000000001,126.0 V122.9 M833.2,125.5 V122.1 M834.6,125.5 V122.5 M835.9,126.0 V123.5" stroke="#eee" stroke-width="1.1" stroke-linecap="round"/><path d="M831.2,125.0 L836.5,125.0 L836.5,127.0 Q836.1,129.1 833.8000000000001,129.1 Q831.8000000000001,129.1 831.0,127.5 L829.6,125.3 Q830.0,124.5 831.2,125.7Z" fill="#eee"/><circle cx="833.6" cy="142" r="6.6" fill="#2e2e2e" fill-opacity="0.85"/><circle cx="832.4" cy="140.8" r="2" fill="none" stroke="#eee" stroke-width="0.9"/><circle cx="835.2" cy="143.4" r="1.6" fill="none" stroke="#eee" stroke-width="0.9"/><path d="M830.6,144 l2,-1" stroke="#eee" stroke-width="0.8"/><circle cx="833.6" cy="158.5" r="6.6" fill="#2e2e2e" fill-opacity="0.85"/><path d="M830.1,161.3 L831.4,156.0 L835.8000000000001,156.0 L837.1,161.3 Z M832.6,156.0 L832.3000000000001,161.3 M834.6,156.0 L834.9,161.3 M830.7,158.5 H836.5" fill="none" stroke="#eee" stroke-width="0.8"/></svg>
<div class="b" style="left:5.50px;top:27.80px;width:16.00px;height:10.50px;background:#282828;border-radius:3px"></div>
<svg style="left:4px;top:27px" width="20" height="12" viewBox="4 27 20 12"><circle cx="12" cy="30.8" r="1.6" fill="#ddd"/><path d="M8.5,36 l1.5,-3 l1.5,3 M12,32.5 v3.5 M9,34 h5" stroke="#ddd" stroke-width="0.9" fill="none"/><path d="M16.2,32.4 L18,34.199999999999996 L19.8,32.4" fill="none" stroke="#bbb" stroke-width="0.8"/></svg>
<div class="b" style="left:26.00px;top:27.80px;width:51.50px;height:10.50px;background:#282828;border-radius:3px"></div>
<svg style="left:26px;top:27px" width="52" height="12" viewBox="26 27 52 12"><rect x="28.5" y="29.5" width="7" height="7" fill="none" stroke="#ccc" stroke-width="0.8" stroke-dasharray="1.5 1"/><rect x="32.5" y="28.5" width="4" height="4" fill="#eee"/><path d="M71.7,32.4 L73.5,34.199999999999996 L75.3,32.4" fill="none" stroke="#bbb" stroke-width="0.8"/></svg>
<div class="t" style="left:38.50px;top:28.92px;font-size:6.8px;color:#d0d0d0;transform:scaleX(0.82);transform-origin:left center;">編集モード</div>
<div class="b" style="left:81.00px;top:27.80px;width:30.00px;height:10.50px;background:#3c3c3c;border-radius:3px"></div>
<div class="b" style="left:91.00px;top:27.80px;width:10.00px;height:10.50px;background:#4772b3;"></div>
<svg style="left:80px;top:27px" width="32" height="12" viewBox="80 27 32 12"><rect x="83.5" y="30" width="5" height="5.5" fill="none" stroke="#ccc" stroke-width="0.8"/><circle cx="83.5" cy="30" r="1" fill="#fff"/><path d="M96,30 v6" stroke="#fff" stroke-width="1.2"/><rect x="93.5" y="29.5" width="5" height="6.5" rx="2" fill="none" stroke="#fff" stroke-width="0.8"/><rect x="103" y="30.5" width="6" height="5.5" fill="#ddd"/><rect x="104" y="29" width="5" height="1.5" fill="#999"/></svg>
<div class="t" style="left:118.50px;top:28.92px;font-size:6.8px;color:#d8d8d8;transform:scaleX(0.82);transform-origin:left center;">ビュー</div>
<div class="t" style="left:144.00px;top:28.92px;font-size:6.8px;color:#d8d8d8;transform:scaleX(0.82);transform-origin:left center;">選択</div>
<div class="t" style="left:164.00px;top:28.92px;font-size:6.8px;color:#d8d8d8;transform:scaleX(0.82);transform-origin:left center;">追加</div>
<div class="t" style="left:184.00px;top:28.92px;font-size:6.8px;color:#d8d8d8;transform:scaleX(0.82);transform-origin:left center;">メッシュ</div>
<div class="t" style="left:215.00px;top:28.92px;font-size:6.8px;color:#d8d8d8;transform:scaleX(0.82);transform-origin:left center;">頂点</div>
<div class="t" style="left:235.00px;top:28.92px;font-size:6.8px;color:#d8d8d8;transform:scaleX(0.82);transform-origin:left center;">辺</div>
<div class="t" style="left:248.00px;top:28.92px;font-size:6.8px;color:#d8d8d8;transform:scaleX(0.82);transform-origin:left center;">面</div>
<div class="t" style="left:262.00px;top:28.92px;font-size:6.8px;color:#d8d8d8;">UV</div>
<div class="b" style="left:353.00px;top:28.00px;width:48.50px;height:10.00px;background:#282828;border-radius:3px"></div>
<div class="b" style="left:405.00px;top:28.00px;width:16.50px;height:10.00px;background:#282828;border-radius:3px"></div>
<div class="b" style="left:435.50px;top:28.00px;width:17.00px;height:10.00px;background:#282828;border-radius:0 3px 3px 0"></div>
<div class="b" style="left:467.50px;top:28.00px;width:15.00px;height:10.00px;background:#282828;border-radius:0 3px 3px 0"></div>
<svg style="left:350px;top:27px" width="52" height="12" viewBox="350 27 52 12"><path d="M355,30 V37 H362 M355,37 L360,32" stroke="#ddd" stroke-width="0.9" fill="none"/><path d="M395.7,32.4 L397.5,34.199999999999996 L399.3,32.4" fill="none" stroke="#bbb" stroke-width="0.8"/></svg>
<div class="t" style="left:365.00px;top:28.92px;font-size:6.8px;color:#e0e0e0;transform:scaleX(0.82);transform-origin:left center;">グローバル</div>
<svg style="left:404px;top:27px" width="20" height="12" viewBox="404 27 20 12"><circle cx="409" cy="33" r="2.4" fill="none" stroke="#ddd" stroke-width="0.9"/><circle cx="413" cy="33" r="2.4" fill="none" stroke="#ddd" stroke-width="0.9"/><path d="M416.7,32.4 L418.5,34.199999999999996 L420.3,32.4" fill="none" stroke="#bbb" stroke-width="0.8"/></svg>
<div class="b" style="left:425.00px;top:28.00px;width:10.50px;height:10.00px;background:#545454;border-radius:2px"></div>
<svg style="left:424px;top:27px" width="30" height="12" viewBox="424 27 30 12"><path d="M427.5,34 a3,3 0 1 1 6,0 v1.5 M427.5,34 v1.5 M429.5,34 a1,1 0 1 1 2,0" stroke="#999" stroke-width="0.9" fill="none"/><path d="M437.5,33 v3 M443.5,33 v3 M437.5,34.5 h6" stroke="#ddd" stroke-width="0.8"/><circle cx="442.5" cy="30" r="1.2" fill="#fff"/><path d="M446.7,32.4 L448.5,34.199999999999996 L450.3,32.4" fill="none" stroke="#bbb" stroke-width="0.8"/></svg>
<div class="b" style="left:457.00px;top:28.00px;width:10.50px;height:10.00px;background:#545454;border-radius:2px"></div>
<svg style="left:456px;top:27px" width="34" height="12" viewBox="456 27 34 12"><circle cx="462.2" cy="33" r="3" fill="none" stroke="#ccc" stroke-width="0.8"/><circle cx="462.2" cy="33" r="1.3" fill="#eee"/><path d="M473,37 Q475,29 477,29 Q479,29 481,37" stroke="#666" stroke-width="0.8" fill="none"/><path d="M483.2,32.4 L485,34.199999999999996 L486.8,32.4" fill="none" stroke="#555" stroke-width="0.8"/></svg>
<svg style="left:690px;top:27px" width="20" height="12" viewBox="690 27 20 12"><path d="M693,33 q3.5,-4 7,0 q-3.5,3 -7,0z" fill="#ddd"/><path d="M693.5,35 l2,2.5" stroke="#ddd" stroke-width="1"/><path d="M703.2,32.4 L705,34.199999999999996 L706.8,32.4" fill="none" stroke="#bbb" stroke-width="0.8"/></svg>
<div class="b" style="left:711.50px;top:28.00px;width:10.50px;height:10.00px;background:#4772b3;border-radius:2px"></div>
<svg style="left:710px;top:27px" width="22" height="12" viewBox="710 27 22 12"><path d="M713.5,36.5 L720,30 M716,30 H720 V34 M713.5,31 q4,1 5,6" stroke="#fff" stroke-width="0.9" fill="none"/><path d="M725.2,32.4 L727,34.199999999999996 L728.8,32.4" fill="none" stroke="#bbb" stroke-width="0.8"/></svg>
<div class="b" style="left:735.50px;top:28.00px;width:10.50px;height:10.00px;background:#4772b3;border-radius:2px"></div>
<svg style="left:734px;top:27px" width="22" height="12" viewBox="734 27 22 12"><circle cx="739.7" cy="34" r="3" fill="none" stroke="#fff" stroke-width="0.9"/><circle cx="742" cy="32" r="2.6" fill="#fff"/><path d="M749.2,32.4 L751,34.199999999999996 L752.8,32.4" fill="none" stroke="#bbb" stroke-width="0.8"/></svg>
<svg style="left:756px;top:27px" width="20" height="12" viewBox="756 27 20 12"><rect x="758.5" y="30" width="6" height="6" fill="none" stroke="#ccc" stroke-width="0.8"/><rect x="763" y="28.8" width="3" height="3" fill="#fff"/><circle cx="758.5" cy="36" r="0.9" fill="#ccc"/><path d="M769.2,32.4 L771,34.199999999999996 L772.8,32.4" fill="none" stroke="#bbb" stroke-width="0.8"/></svg>
<div class="b" style="left:777.00px;top:28.00px;width:10.00px;height:10.00px;background:#3c3c3c;border-radius:2px"></div>
<svg style="left:776px;top:27px" width="12" height="12" viewBox="776 27 12 12"><rect x="778.8" y="31" width="5" height="5" fill="none" stroke="#ddd" stroke-width="0.8"/><rect x="780.5" y="29.5" width="5" height="5" fill="none" stroke="#ddd" stroke-width="0.8"/></svg>
<div class="b" style="left:789.50px;top:28.00px;width:41.00px;height:10.00px;background:#3c3c3c;border-radius:3px"></div>
<div class="b" style="left:810.50px;top:28.00px;width:10.00px;height:10.00px;background:#4772b3;"></div>
<svg style="left:788px;top:27px" width="52" height="12" viewBox="788 27 52 12"><circle cx="795" cy="33" r="3.3" fill="none" stroke="#ccc" stroke-width="0.8"/><path d="M791.7,33 h6.6 M795,29.7 v6.6" stroke="#ccc" stroke-width="0.6"/><circle cx="805.5" cy="33" r="3.5" fill="#c8c8c8"/><circle cx="815.3" cy="33" r="3.8" fill="#dfe8f5"/><path d="M816.2,29.5 A3.5,3.5 0 0 1 818.8,34 L816.2,33 Z" fill="#3a64a8"/><path d="M812.5,34.8 A3.5,3.5 0 0 0 815.8,36.6 L815,35 Z" fill="#3a64a8"/><circle cx="825.5" cy="33" r="3.5" fill="#9a9a9a"/><path d="M823,35 l4,-4" stroke="#ddd" stroke-width="0.9"/><path d="M834.2,32.4 L836,34.199999999999996 L837.8,32.4" fill="none" stroke="#bbb" stroke-width="0.8"/></svg>
<div class="b" style="left:4.00px;top:40.50px;width:74.00px;height:12.80px;background:rgba(40,40,40,0.6);border-radius:3px"></div>
<svg style="left:0px;top:38px" width="80" height="16" viewBox="0 38 80 16"><rect x="8" y="41.8" width="10.5" height="10.5" fill="none" stroke="#c8a040" stroke-width="0.8" stroke-dasharray="1.2 1"/><path d="M11.5,44 V50 L13,48.5 L14.2,50.8 L15,50.4 L13.9,48.2 L16,48 Z" fill="#eee"/><rect x="24.5" y="41.8" width="9.5" height="10.5" fill="#4772b3"/><rect x="26" y="43.3" width="6.5" height="7.5" fill="none" stroke="#bcd" stroke-width="0.6" stroke-dasharray="1 1"/><rect x="36" y="43.5" width="4.5" height="7" fill="#ddd"/><rect x="39.5" y="42.5" width="3.5" height="4" fill="#aaa"/><rect x="46" y="43.5" width="6" height="7" fill="none" stroke="#aaa" stroke-width="0.6" stroke-dasharray="1 1"/><rect x="48" y="45.5" width="4" height="5" fill="#ddd"/><rect x="56" y="43" width="7" height="7.5" fill="#ddd"/><rect x="58" y="45" width="3" height="3.5" fill="#333"/><rect x="66" y="43" width="7.5" height="7.5" fill="none" stroke="#aaa" stroke-width="0.6" stroke-dasharray="1 1"/><rect x="68.2" y="45.2" width="3" height="3" fill="#ddd"/></svg>
<div class="b" style="left:740.00px;top:40.50px;width:105.00px;height:12.80px;background:rgba(44,44,44,0.75);border-radius:3px 0 0 3px"></div>
<div class="b" style="left:756.50px;top:41.50px;width:8.80px;height:10.50px;background:#474747;border-radius:2px 0 0 2px"></div>
<div class="b" style="left:766.00px;top:41.50px;width:8.80px;height:10.50px;background:#474747;"></div>
<div class="b" style="left:775.50px;top:41.50px;width:8.80px;height:10.50px;background:#474747;border-radius:0 2px 2px 0"></div>
<div class="b" style="left:787.00px;top:41.50px;width:10.00px;height:10.50px;background:#474747;border-radius:2px"></div>
<div class="b" style="left:800.00px;top:41.50px;width:41.50px;height:10.50px;background:#282828;border-radius:3px"></div>
<svg style="left:740px;top:40px" width="105" height="14" viewBox="740 40 105 14"><path d="M748.5,43 v8 M748.5,44.5 L745,43 L744.8,47 L746.5,47.2 L745,50.5 L748.5,49.5 M748.5,44.5 L752,43 L752.2,47 L750.5,47.2 L752,50.5 L748.5,49.5" stroke="#ccc" stroke-width="0.7" fill="none"/><circle cx="790" cy="49.5" r="1.3" fill="#ccc"/><circle cx="794" cy="44.5" r="1.3" fill="#ccc"/><path d="M790.5,48 L793.5,45.5" stroke="#aaa" stroke-width="0.5" stroke-dasharray="0.8 0.6"/><path d="M836.2,45.9 L838,47.699999999999996 L839.8,45.9" fill="none" stroke="#bbb" stroke-width="0.8"/></svg>
<div class="t" style="left:761.00px;top:42.96px;font-size:6.4px;color:#d8d8d8;transform:translateX(-50%) ;">X</div>
<div class="t" style="left:770.50px;top:42.96px;font-size:6.4px;color:#d8d8d8;transform:translateX(-50%) ;">Y</div>
<div class="t" style="left:780.00px;top:42.96px;font-size:6.4px;color:#d8d8d8;transform:translateX(-50%) ;">Z</div>
<div class="t" style="left:804.00px;top:42.72px;font-size:6.8px;color:#d8d8d8;transform:scaleX(0.82);transform-origin:left center;">オプション</div>
<svg style="left:0px;top:60px" width="6" height="8" viewBox="0 60 6 8"><path d="M1.5,63 l1.8,1.8 l-1.8,1.8" fill="none" stroke="#aaa" stroke-width="0.7"/></svg>
<svg style="left:840px;top:60px" width="6" height="8" viewBox="840 60 6 8"><path d="M844.5,63 l-1.8,1.8 l1.8,1.8" fill="none" stroke="#aaa" stroke-width="0.7"/></svg>
<div class="b" style="left:846.80px;top:26.50px;width:176.40px;height:163.90px;background:#272727;border-radius:4px"></div>
<div class="b" style="left:852.50px;top:28.00px;width:16.00px;height:10.50px;background:#232323;border-radius:3px"></div>
<div class="b" style="left:871.00px;top:28.00px;width:17.50px;height:10.50px;background:#232323;border-radius:3px"></div>
<div class="b" style="left:898.00px;top:28.00px;width:62.50px;height:10.50px;background:#1d1d1d;border-radius:3px"></div>
<div class="b" style="left:926.50px;top:28.00px;width:0.00px;height:0.00px;background:#000;"></div>
<div class="b" style="left:986.00px;top:28.00px;width:17.00px;height:10.50px;background:#232323;border-radius:3px"></div>
<div class="b" style="left:1008.50px;top:28.00px;width:10.50px;height:10.50px;background:#3a3a3a;border-radius:3px"></div>
<svg style="left:846px;top:26px" width="178" height="14" viewBox="846 26 178 14"><rect x="855" y="29.5" width="2.2" height="1.6" fill="#ddd"/><path d="M856,31.5 v5 M856,33.5 h1.5 M856,36 h1.5" stroke="#aaa" stroke-width="0.6"/><rect x="858" y="32.6" width="4.5" height="1.8" fill="#ddd"/><rect x="858" y="35.2" width="4.5" height="1.8" fill="#ddd"/><path d="M863.2,32.4 L865,34.199999999999996 L866.8,32.4" fill="none" stroke="#bbb" stroke-width="0.8"/><rect x="873.3" y="30.8" width="6" height="6" rx="0.8" fill="#6a6a6a"/><rect x="874.8" y="29.4" width="6" height="6.2" rx="0.8" fill="#9a9a9a"/><path d="M875.6,34.6 l2.2,-3 l2.2,3 z" fill="#f4f4f4"/><path d="M882.7,32.4 L884.5,34.199999999999996 L886.3,32.4" fill="none" stroke="#bbb" stroke-width="0.8"/><circle cx="905" cy="32.2" r="2.5" fill="none" stroke="#ddd" stroke-width="0.9"/><path d="M903.2,34 l-2.5,2.6" stroke="#ddd" stroke-width="1"/><path d="M987.5,29.5 h7 l-2.8,3.5 v3.5 l-1.4,0.5 v-4 z" fill="none" stroke="#ddd" stroke-width="0.8"/><path d="M996.7,32.4 L998.5,34.199999999999996 L1000.3,32.4" fill="none" stroke="#bbb" stroke-width="0.8"/><rect x="1010.5" y="30.5" width="6" height="6.5" fill="none" stroke="#ccc" stroke-width="0.8"/><circle cx="1016" cy="30" r="1.8" fill="#ddd"/></svg>
<div class="t" style="left:910.00px;top:29.04px;font-size:6.6px;color:#6e6e6e;transform:scaleX(0.82);transform-origin:left center;">検索</div>
<div class="b" style="left:847.50px;top:52.10px;width:175.00px;height:10.50px;background:#2b2b2b;"></div>
<div class="b" style="left:847.50px;top:73.10px;width:175.00px;height:10.50px;background:#2b2b2b;"></div>
<div class="b" style="left:847.50px;top:94.10px;width:175.00px;height:10.50px;background:#2b2b2b;"></div>
<div class="b" style="left:847.50px;top:115.10px;width:175.00px;height:10.50px;background:#2b2b2b;"></div>
<div class="b" style="left:847.50px;top:136.10px;width:175.00px;height:10.50px;background:#2b2b2b;"></div>
<div class="b" style="left:847.50px;top:157.10px;width:175.00px;height:10.50px;background:#2b2b2b;"></div>
<div class="b" style="left:847.50px;top:178.10px;width:175.00px;height:10.50px;background:#2b2b2b;"></div>
<svg style="left:846px;top:40px" width="178" height="45" viewBox="846 40 178 45"><rect x="859.2" y="42.6" width="7.6" height="1.8" fill="#e8e8e8"/><path d="M859.6,45.0 h6.8 v4.6 h-6.8 z" fill="#e8e8e8"/><path d="M861.5,46.400000000000006 v1 h3 v-1" stroke="#444" stroke-width="0.6" fill="none"/><path d="M862,55.8 l2,2 l2,-2" fill="none" stroke="#bbb" stroke-width="0.8"/><rect x="868.3" y="52" width="10.4" height="10" rx="2" fill="#555"/><rect x="869.7" y="53.4" width="7.6" height="1.8" fill="#e8e8e8"/><path d="M870.1,55.8 h6.8 v4.6 h-6.8 z" fill="#e8e8e8"/><path d="M872.0,57.2 v1 h3 v-1" stroke="#444" stroke-width="0.6" fill="none"/><path d="M874,65.5 l1.8,1.8 l-1.8,1.8 M874,76 l1.8,1.8 l-1.8,1.8" fill="none" stroke="#bbb" stroke-width="0.8"/><path d="M880.2,64.5 h6.6 l-3.3,6.4 z" fill="none" stroke="#e69440" stroke-width="1.4" stroke-linejoin="round"/><rect x="878.8" y="72.8" width="10.4" height="10" rx="2" fill="#4a4a4a"/><path d="M880.7,74.8 h6.6 l-3.3,6.4 z" fill="none" stroke="#e69440" stroke-width="1.4" stroke-linejoin="round"/><rect x="924.8" y="62.5" width="10.4" height="10" rx="2" fill="#1d4a3f"/><path d="M926.7,64.5 h6.6 l-3.3,6.4 z" fill="none" stroke="#3cc8a0" stroke-width="1.3" stroke-linejoin="round"/><path d="M927,65.0 l3,3 l3,-3" fill="none" stroke="#3cc8a0" stroke-width="0.8"/><rect x="924.8" y="72.8" width="10.4" height="10" rx="2" fill="#1d4a3f"/><path d="M926.7,74.8 h6.6 l-3.3,6.4 z" fill="none" stroke="#3cc8a0" stroke-width="1.3" stroke-linejoin="round"/><path d="M927,75.3 l3,3 l3,-3" fill="none" stroke="#3cc8a0" stroke-width="0.8"/><path d="M862.5,64 V80" stroke="#444" stroke-width="0.7"/><rect x="848.5" y="65.0" width="5.5" height="5.5" fill="none" stroke="#bbb" stroke-width="0.6"/><circle cx="848.5" cy="70.5" r="0.9" fill="none" stroke="#bbb" stroke-width="0.5"/><circle cx="854" cy="70.5" r="0.9" fill="none" stroke="#bbb" stroke-width="0.5"/><rect x="852.8" y="63.3" width="3" height="3" fill="#eee"/><rect x="848.5" y="75.3" width="5.5" height="5.5" fill="none" stroke="#bbb" stroke-width="0.6"/><circle cx="848.5" cy="80.8" r="0.9" fill="none" stroke="#bbb" stroke-width="0.5"/><circle cx="854" cy="80.8" r="0.9" fill="none" stroke="#bbb" stroke-width="0.5"/><rect x="852.8" y="73.6" width="3" height="3" fill="#eee"/><rect x="988.5" y="53.5" width="7" height="7" rx="1" fill="#eee"/><path d="M990,57 l1.5,1.5 l3,-3" fill="none" stroke="#222" stroke-width="0.9"/><path d="M999.0,57 q3.5,-4 7,0 q-3.5,4 -7,0z" fill="none" stroke="#e0e0e0" stroke-width="0.9"/><circle cx="1002.5" cy="57" r="1.2" fill="#e0e0e0"/><rect x="1010.0" y="54.5" width="7" height="5.5" rx="0.8" fill="#e0e0e0"/><rect x="1012.0" y="53.4" width="3" height="1.5" fill="#e0e0e0"/><circle cx="1013.5" cy="57.3" r="1.5" fill="#282828"/><path d="M999.0,67.5 q3.5,-4 7,0 q-3.5,4 -7,0z" fill="none" stroke="#e0e0e0" stroke-width="0.9"/><circle cx="1002.5" cy="67.5" r="1.2" fill="#e0e0e0"/><rect x="1010.0" y="65.0" width="7" height="5.5" rx="0.8" fill="#e0e0e0"/><rect x="1012.0" y="63.9" width="3" height="1.5" fill="#e0e0e0"/><circle cx="1013.5" cy="67.8" r="1.5" fill="#282828"/><path d="M999.0,77.8 q3.5,-4 7,0 q-3.5,4 -7,0z" fill="none" stroke="#e0e0e0" stroke-width="0.9"/><circle cx="1002.5" cy="77.8" r="1.2" fill="#e0e0e0"/><rect x="1010.0" y="75.3" width="7" height="5.5" rx="0.8" fill="#e0e0e0"/><rect x="1012.0" y="74.2" width="3" height="1.5" fill="#e0e0e0"/><circle cx="1013.5" cy="78.1" r="1.5" fill="#282828"/></svg>
<div class="t" style="left:869.50px;top:42.72px;font-size:6.8px;color:#d8d8d8;transform:scaleX(0.82);transform-origin:left center;">シーンコレクション</div>
<div class="t" style="left:881.00px;top:53.32px;font-size:6.8px;color:#f0f0f0;">Collection</div>
<div class="t" style="left:891.50px;top:64.02px;font-size:6.8px;color:#d8d8d8;">Ochoco</div>
<div class="t" style="left:891.50px;top:74.32px;font-size:6.8px;color:#d8d8d8;">Tokkuri</div>
<div class="b" style="left:846.80px;top:192.50px;width:176.40px;height:345.80px;background:#2b2b2b;border-radius:4px"></div>
<div class="b" style="left:847.50px;top:205.00px;width:14.80px;height:330.30px;background:#1d1d1d;"></div>
<svg style="left:846px;top:192px" width="24" height="14" viewBox="846 192 24 14"><rect x="854" y="195.5" width="7" height="3" rx="1.5" fill="#eee"/><rect x="854" y="199.5" width="7" height="3" rx="1.5" fill="#eee"/><circle cx="858.5" cy="197" r="1" fill="#333"/><circle cx="856.5" cy="201" r="1" fill="#333"/><path d="M862.2,197.6 L864,199.4 L865.8,197.6" fill="none" stroke="#bbb" stroke-width="0.8"/></svg>
<div class="b" style="left:904.50px;top:194.00px;width:62.50px;height:9.20px;background:#1d1d1d;border-radius:3px"></div>
<div class="b" style="left:1011.50px;top:194.50px;width:9.50px;height:9.50px;background:#232323;border-radius:3px"></div>
<svg style="left:900px;top:192px" width="124" height="14" viewBox="900 192 124 14"><circle cx="911.5" cy="198" r="2.3" fill="none" stroke="#ddd" stroke-width="0.9"/><path d="M909.8,199.8 l-2.3,2.3" stroke="#ddd" stroke-width="1"/><path d="M1014.2,198.29999999999998 L1016,200.1 L1017.8,198.29999999999998" fill="none" stroke="#ccc" stroke-width="0.8"/></svg>
<div class="t" style="left:917.00px;top:195.16px;font-size:6.4px;color:#6e6e6e;transform:scaleX(0.82);transform-origin:left center;">検索</div>
<svg style="left:846px;top:205px" width="17" height="225" viewBox="846 205 17 225"><path d="M852,216 v4 M851,220 h2 l-0.5,2 h-1z" stroke="#ddd" stroke-width="0.9" fill="#ddd"/><path d="M855.5,213 l1.5,3 l1.5,-3 M857,216 v6" stroke="#ddd" stroke-width="1" fill="none"/><g transform="translate(0,1.5)"><rect x="851" y="231.5" width="8.5" height="6" rx="1" fill="none" stroke="#ddd" stroke-width="0.9"/><path d="M853,231.5 v-1.5 h4.5 v1.5" stroke="#ddd" stroke-width="0.9" fill="none"/></g><rect x="851" y="247" width="8.5" height="3" fill="#ddd"/><rect x="852.5" y="250" width="5.5" height="3.5" fill="none" stroke="#ddd" stroke-width="0.9"/><rect x="851.5" y="263" width="7" height="6.5" fill="#888"/><rect x="852.5" y="262" width="7" height="6.5" fill="#ddd"/><path d="M854,267 l2,-3 l2,3z" fill="#555"/><path d="M851,284.5 l2.5,-6 l2.5,6z" fill="#ddd"/><circle cx="857" cy="283" r="2.3" fill="none" stroke="#ddd" stroke-width="0.9"/><circle cx="855.3" cy="296" r="4" fill="#b04a4a"/><path d="M852,294 q3,2 6.5,-1 M852.5,298.5 q3,-2 6,0.5" stroke="#333" stroke-width="0.8" fill="none"/><g transform="translate(0,2.5)"><rect x="851.3" y="307" width="8" height="8" rx="1" fill="#ddd"/><rect x="852.5" y="309.5" width="5.5" height="4.5" fill="#333"/><path d="M853.5,311.5 h3.5" stroke="#ddd" stroke-width="0.7"/></g><g transform="translate(0,2.2)"><rect x="849.3" y="327.5" width="12" height="11" rx="2" fill="#3d3d3d"/><rect x="851.8" y="329.5" width="7" height="7" rx="0.8" fill="#e8944a" stroke="#ffd0a0" stroke-width="0.5"/></g><g transform="translate(0,1.3)"><path d="M852,352 l5,-5" stroke="#5a9ae0" stroke-width="1.6"/><circle cx="858" cy="345.5" r="2" fill="none" stroke="#5a9ae0" stroke-width="1.2"/></g><g transform="translate(0,1.0)"><path d="M852,359.5 l6,6.5 M852,359.5 v6 M852,359.5 h5" stroke="#5a9ae0" stroke-width="1"/><circle cx="852" cy="359.5" r="1.1" fill="#9cf"/><circle cx="858" cy="366" r="1.1" fill="#9cf"/></g><circle cx="855.3" cy="378" r="3.5" fill="none" stroke="#5a9ae0" stroke-width="1"/><circle cx="855.3" cy="378" r="1.5" fill="#9cf"/><ellipse cx="855.3" cy="393" rx="4" ry="3.2" fill="none" stroke="#5a9ae0" stroke-width="1.2"/><circle cx="855.3" cy="393" r="1.4" fill="#5a9ae0"/><path d="M851.5,404.5 h7.6 l-3.8,7.5z" fill="none" stroke="#3cc8a0" stroke-width="1.3"/><circle cx="855.3" cy="422" r="4" fill="#e07070"/><path d="M852,420.5 h6.5 M855.3,418 v4" stroke="#444" stroke-width="0.7"/></svg>
<svg style="left:862px;top:206px" width="162" height="36" viewBox="862 206 162 36"><rect x="868" y="211" width="8" height="8" rx="1.5" fill="none" stroke="#bbb" stroke-width="0.6" stroke-dasharray="1.6 1.2"/><rect x="869.6" y="212.6" width="4.8" height="4.8" fill="#eee"/><path d="M1012,218.5 l3,-3 M1013.5,213 l3.5,3.5 M1014.5,212 h2.5 l1.8,1.8 v2.5" stroke="#999" stroke-width="0.8" fill="none"/><rect x="868.5" y="230" width="8" height="8" rx="1.5" fill="none" stroke="#bbb" stroke-width="0.6" stroke-dasharray="1.6 1.2"/><rect x="870.1" y="231.6" width="4.8" height="4.8" fill="#eee"/><path d="M878.7,233.29999999999998 L880.5,235.1 L882.3,233.29999999999998" fill="none" stroke="#bbb" stroke-width="0.8"/></svg>
<div class="t" style="left:880.00px;top:210.92px;font-size:6.8px;color:#dcdcdc;">Tokkuri</div>
<div class="b" style="left:884.00px;top:229.50px;width:135.00px;height:9.50px;background:#1d1d1d;border-radius:3px"></div>
<div class="t" style="left:887.50px;top:230.22px;font-size:6.8px;color:#e8e8e8;">Tokkuri</div>
<div class="b" style="left:866.40px;top:245.00px;width:153.60px;height:149.00px;background:#3d3d3d;border-radius:4px"></div>
<svg style="left:866px;top:245px" width="154" height="12" viewBox="866 245 154 12"><path d="M871.2,250.6 L873,252.4 L874.8,250.6" fill="none" stroke="#ccc" stroke-width="0.8"/><path d="M1010,250.5 h7 M1010,252.5 h7" stroke="#4a4a4a" stroke-width="0.6"/></svg>
<div class="t" style="left:877.50px;top:247.46px;font-size:6.9px;color:#e8e8e8;transform:scaleX(0.82);transform-origin:left center;">トランスフォーム</div>
<div class="b" style="left:926.80px;top:263.00px;width:66.70px;height:10.00px;background:#545454;border-radius:2px"></div>
<div class="t" style="left:960.00px;top:263.92px;font-size:6.8px;color:#e8e8e8;transform:translateX(-50%) ;">0 m</div>
<div class="b" style="left:926.80px;top:273.30px;width:66.70px;height:10.00px;background:#545454;border-radius:2px"></div>
<div class="t" style="left:960.00px;top:274.22px;font-size:6.8px;color:#e8e8e8;transform:translateX(-50%) ;">0 m</div>
<div class="b" style="left:926.80px;top:283.60px;width:66.70px;height:10.00px;background:#545454;border-radius:2px"></div>
<div class="t" style="left:960.00px;top:284.52px;font-size:6.8px;color:#e8e8e8;transform:translateX(-50%) ;">0 m</div>
<div class="b" style="left:926.80px;top:297.50px;width:66.70px;height:10.00px;background:#545454;border-radius:2px"></div>
<div class="t" style="left:960.00px;top:298.42px;font-size:6.8px;color:#e8e8e8;transform:translateX(-50%) ;">0°</div>
<div class="b" style="left:926.80px;top:307.80px;width:66.70px;height:10.00px;background:#545454;border-radius:2px"></div>
<div class="t" style="left:960.00px;top:308.72px;font-size:6.8px;color:#e8e8e8;transform:translateX(-50%) ;">0°</div>
<div class="b" style="left:926.80px;top:318.10px;width:66.70px;height:10.00px;background:#545454;border-radius:2px"></div>
<div class="t" style="left:960.00px;top:319.02px;font-size:6.8px;color:#e8e8e8;transform:translateX(-50%) ;">0°</div>
<div class="b" style="left:926.80px;top:332.20px;width:66.70px;height:9.00px;background:#282828;border-radius:2px"></div>
<div class="t" style="left:931.00px;top:332.52px;font-size:6.8px;color:#e8e8e8;">XYZ オイラー角</div>
<div class="b" style="left:926.80px;top:345.50px;width:66.70px;height:10.00px;background:#545454;border-radius:2px"></div>
<div class="t" style="left:960.00px;top:346.42px;font-size:6.8px;color:#e8e8e8;transform:translateX(-50%) ;">1.000</div>
<div class="b" style="left:926.80px;top:355.80px;width:66.70px;height:10.00px;background:#545454;border-radius:2px"></div>
<div class="t" style="left:960.00px;top:356.72px;font-size:6.8px;color:#e8e8e8;transform:translateX(-50%) ;">1.000</div>
<div class="b" style="left:926.80px;top:366.10px;width:66.70px;height:10.00px;background:#545454;border-radius:2px"></div>
<div class="t" style="left:960.00px;top:367.02px;font-size:6.8px;color:#e8e8e8;transform:translateX(-50%) ;">1.000</div>
<svg style="left:866px;top:255px" width="158" height="140" viewBox="866 255 158 140"><path d="M996.4,268.2 v-2.2 a1.7,1.7 0 0 1 3.4,0 v0.6" fill="none" stroke="#c8c8c8" stroke-width="0.7"/><rect x="998.2" y="267.4" width="4.6" height="3.4" rx="0.9" fill="none" stroke="#c8c8c8" stroke-width="0.7"/><circle cx="1010" cy="268.3" r="1.05" fill="#eee"/><path d="M996.4,278.5 v-2.2 a1.7,1.7 0 0 1 3.4,0 v0.6" fill="none" stroke="#c8c8c8" stroke-width="0.7"/><rect x="998.2" y="277.7" width="4.6" height="3.4" rx="0.9" fill="none" stroke="#c8c8c8" stroke-width="0.7"/><circle cx="1010" cy="278.6" r="1.05" fill="#eee"/><path d="M996.4,288.8 v-2.2 a1.7,1.7 0 0 1 3.4,0 v0.6" fill="none" stroke="#c8c8c8" stroke-width="0.7"/><rect x="998.2" y="288.0" width="4.6" height="3.4" rx="0.9" fill="none" stroke="#c8c8c8" stroke-width="0.7"/><circle cx="1010" cy="288.90000000000003" r="1.05" fill="#eee"/><path d="M996.4,302.7 v-2.2 a1.7,1.7 0 0 1 3.4,0 v0.6" fill="none" stroke="#c8c8c8" stroke-width="0.7"/><rect x="998.2" y="301.9" width="4.6" height="3.4" rx="0.9" fill="none" stroke="#c8c8c8" stroke-width="0.7"/><circle cx="1010" cy="302.8" r="1.05" fill="#eee"/><path d="M996.4,313.0 v-2.2 a1.7,1.7 0 0 1 3.4,0 v0.6" fill="none" stroke="#c8c8c8" stroke-width="0.7"/><rect x="998.2" y="312.2" width="4.6" height="3.4" rx="0.9" fill="none" stroke="#c8c8c8" stroke-width="0.7"/><circle cx="1010" cy="313.1" r="1.05" fill="#eee"/><path d="M996.4,323.3 v-2.2 a1.7,1.7 0 0 1 3.4,0 v0.6" fill="none" stroke="#c8c8c8" stroke-width="0.7"/><rect x="998.2" y="322.5" width="4.6" height="3.4" rx="0.9" fill="none" stroke="#c8c8c8" stroke-width="0.7"/><circle cx="1010" cy="323.40000000000003" r="1.05" fill="#eee"/><path d="M988.2,335.90000000000003 L990,337.7 L991.8,335.90000000000003" fill="none" stroke="#ccc" stroke-width="0.8"/><circle cx="1010" cy="337" r="1.1" fill="#eee"/><path d="M996.4,350.7 v-2.2 a1.7,1.7 0 0 1 3.4,0 v0.6" fill="none" stroke="#c8c8c8" stroke-width="0.7"/><rect x="998.2" y="349.9" width="4.6" height="3.4" rx="0.9" fill="none" stroke="#c8c8c8" stroke-width="0.7"/><circle cx="1010" cy="350.8" r="1.05" fill="#eee"/><path d="M996.4,361.0 v-2.2 a1.7,1.7 0 0 1 3.4,0 v0.6" fill="none" stroke="#c8c8c8" stroke-width="0.7"/><rect x="998.2" y="360.2" width="4.6" height="3.4" rx="0.9" fill="none" stroke="#c8c8c8" stroke-width="0.7"/><circle cx="1010" cy="361.1" r="1.05" fill="#eee"/><path d="M996.4,371.3 v-2.2 a1.7,1.7 0 0 1 3.4,0 v0.6" fill="none" stroke="#c8c8c8" stroke-width="0.7"/><rect x="998.2" y="370.5" width="4.6" height="3.4" rx="0.9" fill="none" stroke="#c8c8c8" stroke-width="0.7"/><circle cx="1010" cy="371.40000000000003" r="1.05" fill="#eee"/><path d="M879.5,386.2 l1.8,1.8 l-1.8,1.8" fill="none" stroke="#ccc" stroke-width="0.8"/></svg>
<div class="b" style="left:926.80px;top:273.00px;width:66.70px;height:0.40px;background:#484848;"></div>
<div class="b" style="left:926.80px;top:283.30px;width:66.70px;height:0.40px;background:#484848;"></div>
<div class="b" style="left:926.80px;top:307.50px;width:66.70px;height:0.40px;background:#484848;"></div>
<div class="b" style="left:926.80px;top:317.80px;width:66.70px;height:0.40px;background:#484848;"></div>
<div class="b" style="left:926.80px;top:355.50px;width:66.70px;height:0.40px;background:#484848;"></div>
<div class="b" style="left:926.80px;top:365.80px;width:66.70px;height:0.40px;background:#484848;"></div>
<div class="t" style="left:921.50px;top:263.92px;font-size:6.8px;color:#d0d0d0;transform:translateX(-100%) scaleX(0.82);transform-origin:right center;">位置 X</div>
<div class="t" style="left:921.50px;top:274.22px;font-size:6.8px;color:#d0d0d0;transform:translateX(-100%) ;">Y</div>
<div class="t" style="left:921.50px;top:284.52px;font-size:6.8px;color:#d0d0d0;transform:translateX(-100%) ;">Z</div>
<div class="t" style="left:921.50px;top:298.42px;font-size:6.8px;color:#d0d0d0;transform:translateX(-100%) scaleX(0.82);transform-origin:right center;">回転 X</div>
<div class="t" style="left:921.50px;top:308.72px;font-size:6.8px;color:#d0d0d0;transform:translateX(-100%) ;">Y</div>
<div class="t" style="left:921.50px;top:319.02px;font-size:6.8px;color:#d0d0d0;transform:translateX(-100%) ;">Z</div>
<div class="t" style="left:921.50px;top:332.72px;font-size:6.8px;color:#d0d0d0;transform:translateX(-100%) scaleX(0.82);transform-origin:right center;">モード</div>
<div class="t" style="left:921.50px;top:346.42px;font-size:6.8px;color:#d0d0d0;transform:translateX(-100%) scaleX(0.82);transform-origin:right center;">スケール X</div>
<div class="t" style="left:921.50px;top:356.72px;font-size:6.8px;color:#d0d0d0;transform:translateX(-100%) ;">Y</div>
<div class="t" style="left:921.50px;top:367.02px;font-size:6.8px;color:#d0d0d0;transform:translateX(-100%) ;">Z</div>
<div class="t" style="left:885.00px;top:383.86px;font-size:6.9px;color:#e0e0e0;transform:scaleX(0.82);transform-origin:left center;">デルタトランスフォーム</div>
<div class="b" style="left:866.40px;top:395.80px;width:153.60px;height:12.60px;background:#3d3d3d;border-radius:4px"></div>
<svg style="left:866px;top:395px" width="154" height="14" viewBox="866 395 154 14"><path d="M872,400.2 l1.8,1.8 l-1.8,1.8" fill="none" stroke="#ccc" stroke-width="0.8"/><path d="M1009,401.0 h7 M1009,403.0 h7" stroke="#4f4f4f" stroke-width="0.6"/></svg>
<div class="t" style="left:877.50px;top:397.86px;font-size:6.9px;color:#e0e0e0;transform:scaleX(0.82);transform-origin:left center;">関係</div>
<div class="b" style="left:866.40px;top:410.20px;width:153.60px;height:12.60px;background:#3d3d3d;border-radius:4px"></div>
<svg style="left:866px;top:409px" width="154" height="14" viewBox="866 409 154 14"><path d="M872,414.59999999999997 l1.8,1.8 l-1.8,1.8" fill="none" stroke="#ccc" stroke-width="0.8"/><path d="M1009,415.4 h7 M1009,417.4 h7" stroke="#4f4f4f" stroke-width="0.6"/></svg>
<div class="t" style="left:877.50px;top:412.26px;font-size:6.9px;color:#e0e0e0;transform:scaleX(0.82);transform-origin:left center;">コレクション</div>
<div class="b" style="left:866.40px;top:424.60px;width:153.60px;height:12.60px;background:#3d3d3d;border-radius:4px"></div>
<svg style="left:866px;top:423px" width="154" height="14" viewBox="866 423 154 14"><path d="M872,429.0 l1.8,1.8 l-1.8,1.8" fill="none" stroke="#ccc" stroke-width="0.8"/><path d="M1009,429.8 h7 M1009,431.8 h7" stroke="#4f4f4f" stroke-width="0.6"/></svg>
<div class="t" style="left:877.50px;top:426.66px;font-size:6.9px;color:#e0e0e0;transform:scaleX(0.82);transform-origin:left center;">インスタンス化</div>
<div class="b" style="left:866.40px;top:439.00px;width:153.60px;height:12.60px;background:#3d3d3d;border-radius:4px"></div>
<svg style="left:866px;top:438px" width="154" height="14" viewBox="866 438 154 14"><path d="M872,443.4 l1.8,1.8 l-1.8,1.8" fill="none" stroke="#ccc" stroke-width="0.8"/><path d="M1009,444.2 h7 M1009,446.2 h7" stroke="#4f4f4f" stroke-width="0.6"/></svg>
<div class="t" style="left:877.50px;top:441.06px;font-size:6.9px;color:#e0e0e0;transform:scaleX(0.82);transform-origin:left center;">モーションパス</div>
<div class="b" style="left:866.40px;top:453.40px;width:153.60px;height:12.60px;background:#3d3d3d;border-radius:4px"></div>
<svg style="left:866px;top:452px" width="154" height="14" viewBox="866 452 154 14"><path d="M872,457.8 l1.8,1.8 l-1.8,1.8" fill="none" stroke="#ccc" stroke-width="0.8"/><path d="M1009,458.6 h7 M1009,460.6 h7" stroke="#4f4f4f" stroke-width="0.6"/></svg>
<div class="t" style="left:877.50px;top:455.46px;font-size:6.9px;color:#e0e0e0;transform:scaleX(0.82);transform-origin:left center;">シェーディング</div>
<div class="b" style="left:866.40px;top:467.80px;width:153.60px;height:12.60px;background:#3d3d3d;border-radius:4px"></div>
<svg style="left:866px;top:467px" width="154" height="14" viewBox="866 467 154 14"><path d="M872,472.2 l1.8,1.8 l-1.8,1.8" fill="none" stroke="#ccc" stroke-width="0.8"/><path d="M1009,473.0 h7 M1009,475.0 h7" stroke="#4f4f4f" stroke-width="0.6"/></svg>
<div class="t" style="left:877.50px;top:469.86px;font-size:6.9px;color:#e0e0e0;transform:scaleX(0.82);transform-origin:left center;">可視性</div>
<div class="b" style="left:866.40px;top:482.20px;width:153.60px;height:12.60px;background:#3d3d3d;border-radius:4px"></div>
<svg style="left:866px;top:481px" width="154" height="14" viewBox="866 481 154 14"><path d="M872,486.59999999999997 l1.8,1.8 l-1.8,1.8" fill="none" stroke="#ccc" stroke-width="0.8"/><path d="M1009,487.4 h7 M1009,489.4 h7" stroke="#4f4f4f" stroke-width="0.6"/></svg>
<div class="t" style="left:877.50px;top:484.26px;font-size:6.9px;color:#e0e0e0;transform:scaleX(0.82);transform-origin:left center;">ビューポート表示</div>
<div class="b" style="left:866.40px;top:496.60px;width:153.60px;height:12.60px;background:#3d3d3d;border-radius:4px"></div>
<svg style="left:866px;top:495px" width="154" height="14" viewBox="866 495 154 14"><path d="M872,501.0 l1.8,1.8 l-1.8,1.8" fill="none" stroke="#ccc" stroke-width="0.8"/><path d="M1009,501.8 h7 M1009,503.8 h7" stroke="#4f4f4f" stroke-width="0.6"/></svg>
<div class="t" style="left:877.50px;top:498.66px;font-size:6.9px;color:#e0e0e0;transform:scaleX(0.82);transform-origin:left center;">ラインアート</div>
<div class="b" style="left:866.40px;top:511.00px;width:153.60px;height:12.60px;background:#3d3d3d;border-radius:4px"></div>
<svg style="left:866px;top:510px" width="154" height="14" viewBox="866 510 154 14"><path d="M872,515.4000000000001 l1.8,1.8 l-1.8,1.8" fill="none" stroke="#ccc" stroke-width="0.8"/><path d="M1009,516.2 h7 M1009,518.2 h7" stroke="#4f4f4f" stroke-width="0.6"/></svg>
<div class="t" style="left:877.50px;top:513.06px;font-size:6.9px;color:#e0e0e0;transform:scaleX(0.82);transform-origin:left center;">アニメーション</div>
<div class="b" style="left:866.40px;top:525.40px;width:153.60px;height:12.60px;background:#3d3d3d;border-radius:4px"></div>
<svg style="left:866px;top:524px" width="154" height="14" viewBox="866 524 154 14"><path d="M872,529.8000000000001 l1.8,1.8 l-1.8,1.8" fill="none" stroke="#ccc" stroke-width="0.8"/><path d="M1009,530.6 h7 M1009,532.6 h7" stroke="#4f4f4f" stroke-width="0.6"/></svg>
<div class="t" style="left:877.50px;top:527.46px;font-size:6.9px;color:#e0e0e0;transform:scaleX(0.82);transform-origin:left center;">カスタムプロパティ</div>
<div class="b" style="left:1.00px;top:500.30px;width:844.00px;height:37.60px;background:#1d1d1d;border-radius:4px"></div>
<div class="b" style="left:1.00px;top:500.30px;width:844.00px;height:12.50px;background:#303030;border-radius:4px 4px 0 0"></div>
<svg style="left:4px;top:500px" width="20" height="13" viewBox="4 500 20 13"><circle cx="10.8" cy="506.6" r="3.6" fill="#eee"/><path d="M10.8,503 a3.6,3.6 0 0 0 0,7.2 z" fill="#eee"/><path d="M12.5,504.2 l-2,2.4 l2,2.4" stroke="#303030" stroke-width="1.1" fill="none"/><path d="M16.2,506.0 L18,507.79999999999995 L19.8,506.0" fill="none" stroke="#bbb" stroke-width="0.8"/></svg>
<div class="b" style="left:24.50px;top:502.00px;width:24.50px;height:9.50px;background:#282828;border-radius:3px"></div>
<div class="b" style="left:50.00px;top:502.00px;width:41.50px;height:9.50px;background:#282828;border-radius:3px"></div>
<svg style="left:20px;top:500px" width="75" height="13" viewBox="20 500 75 13"><path d="M43.2,506.0 L45,507.79999999999995 L46.8,506.0" fill="none" stroke="#bbb" stroke-width="0.8"/><path d="M86.2,506.0 L88,507.79999999999995 L89.8,506.0" fill="none" stroke="#bbb" stroke-width="0.8"/></svg>
<div class="t" style="left:27.50px;top:502.52px;font-size:6.8px;color:#d8d8d8;transform:scaleX(0.82);transform-origin:left center;">再生</div>
<div class="t" style="left:53.00px;top:502.52px;font-size:6.8px;color:#d8d8d8;transform:scaleX(0.82);transform-origin:left center;">キーイング</div>
<div class="t" style="left:96.00px;top:502.52px;font-size:6.8px;color:#d8d8d8;transform:scaleX(0.82);transform-origin:left center;">ビュー</div>
<div class="t" style="left:122.00px;top:502.52px;font-size:6.8px;color:#d8d8d8;transform:scaleX(0.82);transform-origin:left center;">マーカー</div>
<div class="b" style="left:373.80px;top:502.00px;width:10.50px;height:9.80px;background:#545454;border-radius:2px 0 0 2px"></div>
<div class="b" style="left:384.30px;top:502.00px;width:10.00px;height:9.80px;background:#2e2e2e;border-radius:0 2px 2px 0"></div>
<div class="b" style="left:398.00px;top:502.00px;width:63.00px;height:9.80px;background:#474747;border-radius:3px"></div>
<svg style="left:370px;top:500px" width="95" height="13" viewBox="370 500 95 13"><circle cx="379" cy="507" r="2.6" fill="none" stroke="#bbb" stroke-width="0.8"/><path d="M387.7,506.20000000000005 L389.5,508.0 L391.3,506.20000000000005" fill="none" stroke="#666" stroke-width="0.8"/><path d="M400.4,503.8 v6.4" stroke="#eee" stroke-width="1.1"/><path d="M406.0,503.8 v6.4 l-4.5,-3.2z" fill="#eee"/><path d="M410.09999999999997,507 l1.9,-2.2 l1.9,2.2 l-1.9,2.2z" fill="#eee"/><path d="M417.09999999999997,504.2 v5.6 l-3.2,-2.8z" fill="#eee"/><path d="M426.59999999999997,503.6 v6.8 l-5,-3.4z" fill="#eee"/><path d="M432.5,503.6 v6.8 l5,-3.4z" fill="#eee"/><path d="M441.8,504.2 v5.6 l3.2,-2.8z" fill="#eee"/><path d="M448.8,507 l-1.9,-2.2 l-1.9,2.2 l1.9,2.2z" fill="#eee"/><path d="M452.9,503.8 v6.4 l4.5,-3.2z" fill="#eee"/><path d="M458.5,503.8 v6.4" stroke="#eee" stroke-width="1.1"/><path d="M408.5,502 v9.8" stroke="#3a3a3a" stroke-width="0.6"/><path d="M419.0,502 v9.8" stroke="#3a3a3a" stroke-width="0.6"/><path d="M429.5,502 v9.8" stroke="#3a3a3a" stroke-width="0.6"/><path d="M440.0,502 v9.8" stroke="#3a3a3a" stroke-width="0.6"/><path d="M450.5,502 v9.8" stroke="#3a3a3a" stroke-width="0.6"/></svg>
<div class="b" style="left:696.60px;top:502.00px;width:39.00px;height:9.80px;background:#474747;border-radius:3px"></div>
<div class="t" style="left:716.00px;top:502.94px;font-size:6.6px;color:#e8e8e8;transform:translateX(-50%) ;">0</div>
<div class="b" style="left:739.00px;top:502.00px;width:103.00px;height:9.80px;background:#474747;border-radius:3px"></div>
<div class="b" style="left:739.00px;top:502.00px;width:11.50px;height:9.80px;background:#3c3c3c;border-radius:3px 0 0 3px"></div>
<div class="b" style="left:795.50px;top:502.00px;width:0.70px;height:9.80px;background:#2e2e2e;"></div>
<svg style="left:739px;top:500px" width="12" height="13" viewBox="739 500 12 13"><circle cx="744.5" cy="507.5" r="3" fill="none" stroke="#ddd" stroke-width="0.9"/><path d="M744.5,507.5 v-1.8 M743.5,503.5 h2" stroke="#ddd" stroke-width="0.8"/></svg>
<div class="t" style="left:757.00px;top:502.82px;font-size:6.8px;color:#d8d8d8;transform:scaleX(0.82);transform-origin:left center;">開始</div>
<div class="t" style="left:786.50px;top:502.94px;font-size:6.6px;color:#e8e8e8;transform:translateX(-50%) ;">1</div>
<div class="t" style="left:803.00px;top:502.82px;font-size:6.8px;color:#d8d8d8;transform:scaleX(0.82);transform-origin:left center;">終了</div>
<div class="t" style="left:829.50px;top:502.94px;font-size:6.6px;color:#e8e8e8;transform:translateX(-50%) ;">250</div>
<div class="b" style="left:31.70px;top:524.80px;width:782.70px;height:7.00px;background:#2c2c2c;"></div>
<svg style="left:0px;top:520px" width="845" height="15" viewBox="0 520 845 15"><g stroke="#222" stroke-width="0.7"><path d="M59.84,524.8 v7" /><path d="M91.28,524.8 v7" /><path d="M122.72,524.8 v7" /><path d="M154.16,524.8 v7" /><path d="M185.60,524.8 v7" /><path d="M217.04,524.8 v7" /><path d="M248.48,524.8 v7" /><path d="M279.92,524.8 v7" /><path d="M311.36,524.8 v7" /><path d="M342.80,524.8 v7" /><path d="M374.24,524.8 v7" /><path d="M405.68,524.8 v7" /><path d="M437.12,524.8 v7" /><path d="M468.56,524.8 v7" /><path d="M500.00,524.8 v7" /><path d="M531.44,524.8 v7" /><path d="M562.88,524.8 v7" /><path d="M594.32,524.8 v7" /><path d="M625.76,524.8 v7" /><path d="M657.20,524.8 v7" /><path d="M688.64,524.8 v7" /><path d="M720.08,524.8 v7" /><path d="M751.52,524.8 v7" /><path d="M782.96,524.8 v7" /><path d="M814.40,524.8 v7" /><path d="M44.12,524.8 v7" /><path d="M75.56,524.8 v7" /><path d="M107.00,524.8 v7" /><path d="M138.44,524.8 v7" /><path d="M169.88,524.8 v7" /><path d="M201.32,524.8 v7" /><path d="M232.76,524.8 v7" /><path d="M264.20,524.8 v7" /><path d="M295.64,524.8 v7" /><path d="M327.08,524.8 v7" /><path d="M358.52,524.8 v7" /><path d="M389.96,524.8 v7" /><path d="M421.40,524.8 v7" /><path d="M452.84,524.8 v7" /><path d="M484.28,524.8 v7" /><path d="M515.72,524.8 v7" /><path d="M547.16,524.8 v7" /><path d="M578.60,524.8 v7" /><path d="M610.04,524.8 v7" /><path d="M641.48,524.8 v7" /><path d="M672.92,524.8 v7" /><path d="M704.36,524.8 v7" /><path d="M735.80,524.8 v7" /><path d="M767.24,524.8 v7" /><path d="M798.68,524.8 v7" /></g></svg>
<div class="b" style="left:4.00px;top:532.50px;width:836.00px;height:5.00px;background:#585858;border-radius:2.5px"></div>
<svg style="left:0px;top:530px" width="845" height="8" viewBox="0 530 845 8"><circle cx="7.5" cy="534.3" r="1.2" fill="#222"/><circle cx="836.5" cy="534.3" r="1.2" fill="#222"/></svg>
<div class="t" style="left:59.84px;top:515.64px;font-size:6.6px;color:#d0d0d0;transform:translateX(-50%) ;">10</div>
<div class="t" style="left:91.28px;top:515.64px;font-size:6.6px;color:#d0d0d0;transform:translateX(-50%) ;">20</div>
<div class="t" style="left:122.72px;top:515.64px;font-size:6.6px;color:#d0d0d0;transform:translateX(-50%) ;">30</div>
<div class="t" style="left:154.16px;top:515.64px;font-size:6.6px;color:#d0d0d0;transform:translateX(-50%) ;">40</div>
<div class="t" style="left:185.60px;top:515.64px;font-size:6.6px;color:#d0d0d0;transform:translateX(-50%) ;">50</div>
<div class="t" style="left:217.04px;top:515.64px;font-size:6.6px;color:#d0d0d0;transform:translateX(-50%) ;">60</div>
<div class="t" style="left:248.48px;top:515.64px;font-size:6.6px;color:#d0d0d0;transform:translateX(-50%) ;">70</div>
<div class="t" style="left:279.92px;top:515.64px;font-size:6.6px;color:#d0d0d0;transform:translateX(-50%) ;">80</div>
<div class="t" style="left:311.36px;top:515.64px;font-size:6.6px;color:#d0d0d0;transform:translateX(-50%) ;">90</div>
<div class="t" style="left:342.80px;top:515.64px;font-size:6.6px;color:#d0d0d0;transform:translateX(-50%) ;">100</div>
<div class="t" style="left:374.24px;top:515.64px;font-size:6.6px;color:#d0d0d0;transform:translateX(-50%) ;">110</div>
<div class="t" style="left:405.68px;top:515.64px;font-size:6.6px;color:#d0d0d0;transform:translateX(-50%) ;">120</div>
<div class="t" style="left:437.12px;top:515.64px;font-size:6.6px;color:#d0d0d0;transform:translateX(-50%) ;">130</div>
<div class="t" style="left:468.56px;top:515.64px;font-size:6.6px;color:#d0d0d0;transform:translateX(-50%) ;">140</div>
<div class="t" style="left:500.00px;top:515.64px;font-size:6.6px;color:#d0d0d0;transform:translateX(-50%) ;">150</div>
<div class="t" style="left:531.44px;top:515.64px;font-size:6.6px;color:#d0d0d0;transform:translateX(-50%) ;">160</div>
<div class="t" style="left:562.88px;top:515.64px;font-size:6.6px;color:#d0d0d0;transform:translateX(-50%) ;">170</div>
<div class="t" style="left:594.32px;top:515.64px;font-size:6.6px;color:#d0d0d0;transform:translateX(-50%) ;">180</div>
<div class="t" style="left:625.76px;top:515.64px;font-size:6.6px;color:#d0d0d0;transform:translateX(-50%) ;">190</div>
<div class="t" style="left:657.20px;top:515.64px;font-size:6.6px;color:#d0d0d0;transform:translateX(-50%) ;">200</div>
<div class="t" style="left:688.64px;top:515.64px;font-size:6.6px;color:#d0d0d0;transform:translateX(-50%) ;">210</div>
<div class="t" style="left:720.08px;top:515.64px;font-size:6.6px;color:#d0d0d0;transform:translateX(-50%) ;">220</div>
<div class="t" style="left:751.52px;top:515.64px;font-size:6.6px;color:#d0d0d0;transform:translateX(-50%) ;">230</div>
<div class="t" style="left:782.96px;top:515.64px;font-size:6.6px;color:#d0d0d0;transform:translateX(-50%) ;">240</div>
<div class="t" style="left:814.40px;top:515.64px;font-size:6.6px;color:#d0d0d0;transform:translateX(-50%) ;">250</div>
<div class="b" style="left:22.00px;top:515.00px;width:13.20px;height:9.40px;background:#4772b3;border-radius:2px"></div>
<div class="t" style="left:28.60px;top:515.74px;font-size:6.6px;color:#f0f0f0;transform:translateX(-50%) ;">0</div>
<div class="b" style="left:28.00px;top:524.40px;width:1.00px;height:13.00px;background:#7282a2;"></div>
<svg style="left:0px;top:512px" width="845" height="16" viewBox="0 512 845 16"><path d="M844,523 l-1.8,2 l1.8,2" fill="none" stroke="#999" stroke-width="0.7"/><path d="M2,522 l1.8,2 l-1.8,2" fill="none" stroke="#999" stroke-width="0.7"/></svg>
<div class="b" style="left:0.00px;top:538.30px;width:1024.00px;height:11.70px;background:#191919;"></div>
<div class="t" style="left:1018.00px;top:540.44px;font-size:6.6px;color:#b4b4b4;transform:translateX(-100%) scaleX(0.935);transform-origin:right center;">Tokkuri | 頂点:0/156 | 辺:0/288 | 面:0/136 | 三角面:304 | オブジェクト:2/2 | 4.4.3</div>
</body></html>
